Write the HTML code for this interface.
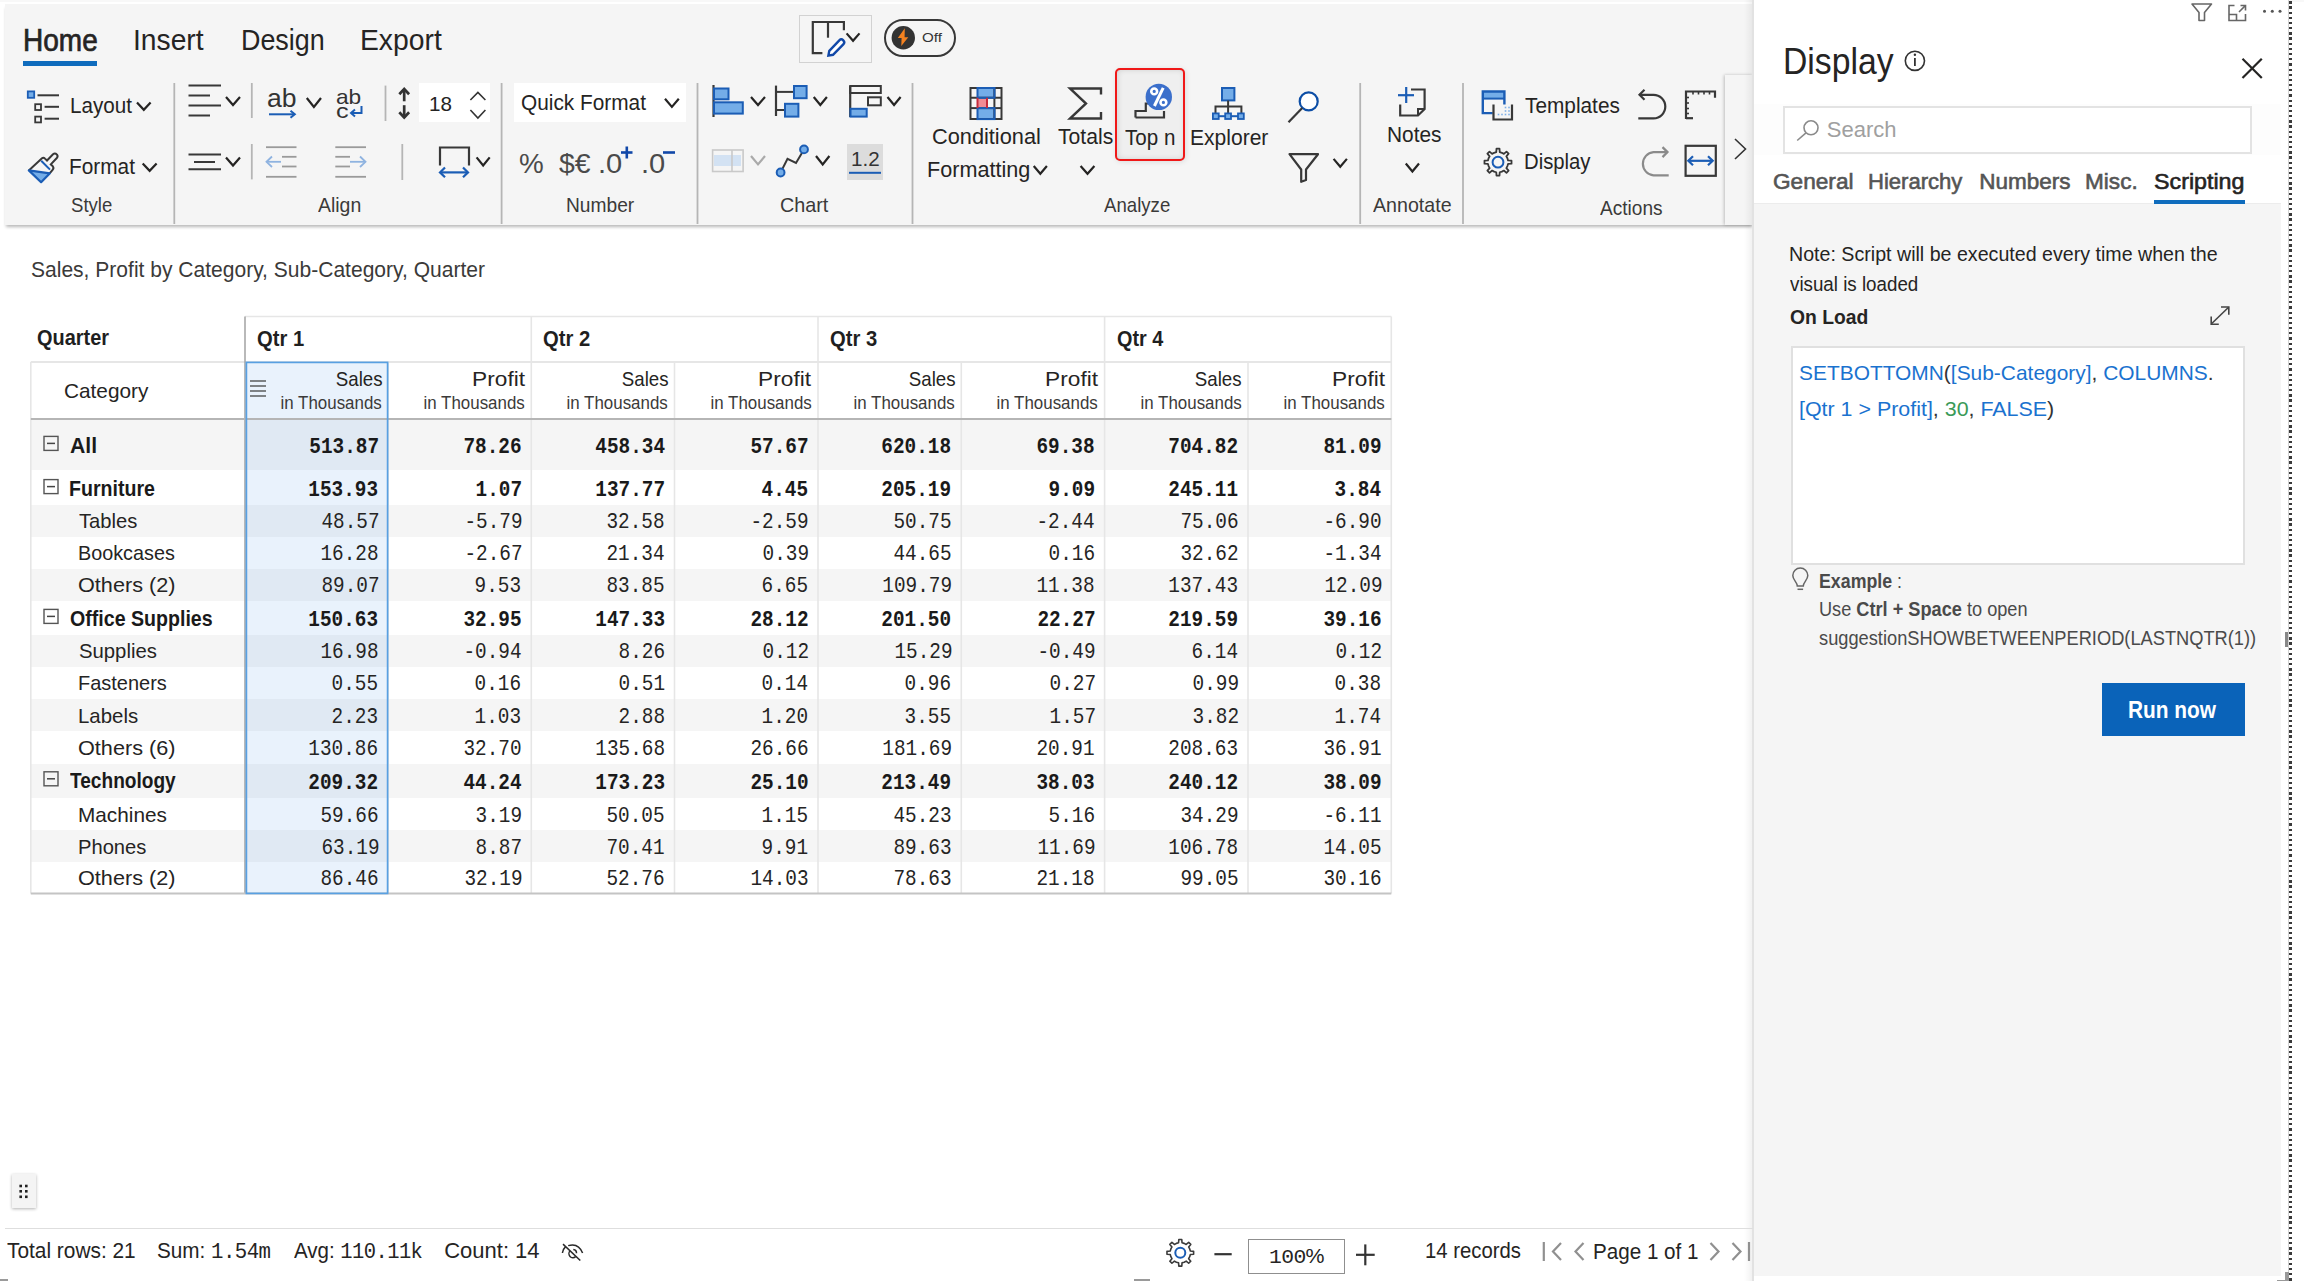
<!DOCTYPE html><html><head><meta charset="utf-8"><style>html,body{margin:0;padding:0;width:2304px;height:1281px;overflow:hidden;background:#fff;position:relative;font-family:"Liberation Sans",sans-serif}b{font-weight:700}</style></head><body>
<div style="position:absolute;left:0px;top:0px;width:2304px;height:2px;background:#f8f8f8"></div>
<div style="position:absolute;left:5px;top:4px;width:1748px;height:221px;background:#f5f5f5;box-shadow:0 3px 3px -1px rgba(0,0,0,.28)"></div>
<div style="position:absolute;left:23px;top:61px;width:74px;height:5px;background:#0f6cbd"></div>
<div style="position:absolute;left:799px;top:14.5px;width:72.5px;height:48px;box-sizing:border-box;border:1.5px solid #d2d2d2;background:#f5f5f5"></div>
<div style="position:absolute;left:884.3px;top:18.9px;width:71.6px;height:37.8px;box-sizing:border-box;border:2px solid #383838;border-radius:19px"></div>
<div style="position:absolute;left:418.6px;top:83px;width:71px;height:39px;background:#fff"></div>
<div style="position:absolute;left:514px;top:83px;width:172px;height:39px;background:#fff"></div>
<div style="position:absolute;left:713.5px;top:155px;width:27px;height:11px;background:#d3e2f3"></div>
<div style="position:absolute;left:847px;top:144px;width:36px;height:36px;background:#dcdcdc"></div>
<div style="position:absolute;left:978px;top:88.5px;width:16px;height:9px;background:#74ade8"></div>
<div style="position:absolute;left:978px;top:108.5px;width:16px;height:10px;background:#74ade8"></div>
<div style="position:absolute;left:978px;top:98.5px;width:9px;height:9px;background:#f08b94"></div>
<div style="position:absolute;left:1116.5px;top:69px;width:68px;height:91px;border-radius:4px;background:#efefef;box-shadow:inset 0 0 6px rgba(0,0,0,.16), 0 1px 6px rgba(0,0,0,.14)"></div>
<div style="position:absolute;left:1115.3px;top:68.2px;width:70.1px;height:92.9px;box-sizing:border-box;border:2.4px solid #f01818;border-radius:5px"></div>
<div style="position:absolute;left:1483.5px;top:92.2px;width:20.2px;height:6.3px;background:#74ade8"></div>
<div style="position:absolute;left:1724.8px;top:75.3px;width:28.5px;height:150px;background:#f5f5f5;box-shadow:-1px 0 3px rgba(0,0,0,.22)"></div>
<div style="position:absolute;left:31px;top:419px;width:1360.3px;height:51px;background:#f5f5f5"></div>
<div style="position:absolute;left:31px;top:505px;width:1360.3px;height:32px;background:#f5f5f5"></div>
<div style="position:absolute;left:31px;top:569px;width:1360.3px;height:32px;background:#f5f5f5"></div>
<div style="position:absolute;left:31px;top:635px;width:1360.3px;height:32px;background:#f5f5f5"></div>
<div style="position:absolute;left:31px;top:699px;width:1360.3px;height:32px;background:#f5f5f5"></div>
<div style="position:absolute;left:31px;top:764px;width:1360.3px;height:34px;background:#f5f5f5"></div>
<div style="position:absolute;left:31px;top:830px;width:1360.3px;height:32px;background:#f5f5f5"></div>
<div style="position:absolute;left:246.5px;top:362px;width:141.5px;height:531.5px;background:rgba(120,175,235,.16)"></div>
<div style="position:absolute;left:1754px;top:0px;width:534px;height:1281px;background:#fff"></div>
<div style="position:absolute;left:1744px;top:0px;width:9px;height:1281px;background:linear-gradient(to right, rgba(0,0,0,0), rgba(0,0,0,.06))"></div>
<div style="position:absolute;left:1752.2px;top:0px;width:1.8px;height:1281px;background:#e2e2e2"></div>
<div style="position:absolute;left:1754px;top:104px;width:527px;height:51px;background:#fdfdfd"></div>
<div style="position:absolute;left:1754px;top:203.5px;width:527px;height:1072px;background:#f5f5f5"></div>
<div style="position:absolute;left:1754px;top:202.5px;width:527px;height:1.5px;background:#ececec"></div>
<div style="position:absolute;left:2287.6px;top:0px;width:1.2px;height:1281px;background:#d2d2d2"></div>
<div style="position:absolute;left:2289.2px;top:0px;width:2.7px;height:1281px;background:repeating-linear-gradient(to bottom,transparent 0,transparent 1.3px,#3a3a3a 1.3px,#3a3a3a 3.6px,transparent 3.6px,transparent 5.17px)"></div>
<div style="position:absolute;left:1783px;top:105.5px;width:469px;height:48px;box-sizing:border-box;border:2px solid #e3e3e3;background:#fff"></div>
<div style="position:absolute;left:2154px;top:200px;width:91px;height:4px;background:#0f6cbd"></div>
<div style="position:absolute;left:1790.5px;top:346px;width:454px;height:218.5px;box-sizing:border-box;border:2px solid #e0e0e0;background:#fff"></div>
<div style="position:absolute;left:2101.5px;top:682.5px;width:143px;height:53.7px;background:#0a63b9"></div>
<div style="position:absolute;left:2284.5px;top:632px;width:3px;height:15px;background:#888"></div>
<div style="position:absolute;left:11.5px;top:1174.3px;width:24.4px;height:33.7px;background:#f4f4f4;box-shadow:0 1px 3px rgba(0,0,0,.3)"></div>
<div style="position:absolute;left:5px;top:1227.5px;width:1748px;height:1.6px;background:#dedede"></div>
<div style="position:absolute;left:1247.8px;top:1239.4px;width:97.2px;height:35px;box-sizing:border-box;border:1.6px solid #8f8f8f;background:#fff"></div>
<div style="position:absolute;left:0px;top:1279.3px;width:8px;height:1.7px;background:#9a9a9a"></div>
<div style="position:absolute;left:1134.3px;top:1279.3px;width:15.6px;height:1.7px;background:#9a9a9a"></div>
<div style="position:absolute;left:2285.2px;top:1272.2px;width:3.6px;height:9px;background:#9a9a9a"></div>
<div style="position:absolute;left:2277px;top:1279.8px;width:8.5px;height:1.2px;background:#9a9a9a"></div>
<svg style="position:absolute;left:0;top:0" width="2304" height="1281" viewBox="0 0 2304 1281"><path d="M822.4,53.2 H812.8 V22 H843.9 V30.3" stroke="#383838" fill="none" stroke-width="2.2" /><line x1="828" y1="22" x2="828" y2="37.7" stroke="#383838" stroke-width="2.2" stroke-linecap="butt"/><path d="M829.3,50.8 L839.3,40.3 a2.8,2.8 0 0 1 4,4 L833,54.8 L828.4,55.6 Z" stroke="#1148a8" fill="#fff" stroke-width="2.4" /><polyline points="846.6,33.4 853.05,40.8 859.5,33.4" fill="none" stroke="#252423" stroke-width="2.2"/><circle cx="903.3" cy="37.7" r="11.7" fill="#333"/><path d="M904.8,28.3 L897.8,38.1 H901.6 L901.3,46 L908.3,37.3 H904.6 Z" stroke="none" fill="#f58220" stroke-width="0" /><rect x="27.8" y="91.4" width="6.4" height="6.4" rx="0" stroke="#1b5db5" fill="#74ade8" stroke-width="1.8"/><line x1="37.5" y1="95.3" x2="59" y2="95.3" stroke="#383838" stroke-width="2" stroke-linecap="butt"/><rect x="35.2" y="104.2" width="5.8" height="5.8" rx="0" stroke="#383838" fill="none" stroke-width="1.8"/><line x1="44.6" y1="106.8" x2="59" y2="106.8" stroke="#383838" stroke-width="2" stroke-linecap="butt"/><rect x="35.2" y="116.6" width="5.8" height="5.8" rx="0" stroke="#383838" fill="none" stroke-width="1.8"/><line x1="44.6" y1="118.7" x2="59" y2="118.7" stroke="#383838" stroke-width="2" stroke-linecap="butt"/><polyline points="137,102.5 143.8,109.8 150.6,102.5" fill="none" stroke="#252423" stroke-width="2.2"/><path d="M28.8,170.4 L42,158.2 Q43.5,157 45,158.6 L47,160.5 L53,154.2 Q55,152.6 57,154.6 Q58.3,156.3 56.8,158 L50.8,164.4 L52.8,166.3 Q54.2,168 52.6,169.8 L49.7,173.4" stroke="#383838" fill="none" stroke-width="2" /><path d="M28.8,170.4 L49.7,173.4 L41.1,182.2 Z" stroke="#1b5db5" fill="#74ade8" stroke-width="2.2" stroke-linejoin="round"/><line x1="41.2" y1="160.8" x2="50" y2="169.6" stroke="#1b5db5" stroke-width="2" stroke-linecap="butt"/><polyline points="142.7,163.5 149.64999999999998,170.8 156.6,163.5" fill="none" stroke="#252423" stroke-width="2.2"/><line x1="174.3" y1="83" x2="174.3" y2="224" stroke="#b5b5b5" stroke-width="1.8" stroke-linecap="butt"/><line x1="188.5" y1="85.5" x2="221" y2="85.5" stroke="#383838" stroke-width="2" stroke-linecap="butt"/><line x1="188.5" y1="95.5" x2="210" y2="95.5" stroke="#383838" stroke-width="2" stroke-linecap="butt"/><line x1="188.5" y1="105.5" x2="221" y2="105.5" stroke="#383838" stroke-width="2" stroke-linecap="butt"/><line x1="188.5" y1="115.5" x2="210" y2="115.5" stroke="#383838" stroke-width="2" stroke-linecap="butt"/><polyline points="226,97 233.0,105 240,97" fill="none" stroke="#252423" stroke-width="2.2"/><line x1="251.8" y1="83" x2="251.8" y2="118" stroke="#b5b5b5" stroke-width="1.8" stroke-linecap="butt"/><line x1="269" y1="114.3" x2="294" y2="114.3" stroke="#1b5db5" stroke-width="2" stroke-linecap="butt"/><path d="M290.5,110.8 L294.8,114.3 L290.5,117.8" stroke="#1b5db5" fill="none" stroke-width="2" /><polyline points="306.8,98 313.9,106.9 321,98" fill="none" stroke="#252423" stroke-width="2.2"/><path d="M361.5,106 V113 H351.5" stroke="#1b5db5" fill="none" stroke-width="2" /><path d="M355,109.5 L351,113 L355,116.5" stroke="#1b5db5" fill="none" stroke-width="2" /><line x1="385.5" y1="85.6" x2="385.5" y2="121" stroke="#b5b5b5" stroke-width="1.8" stroke-linecap="butt"/><line x1="404.2" y1="89" x2="404.2" y2="101.3" stroke="#333" stroke-width="2.7" stroke-linecap="butt"/><line x1="404.2" y1="105.2" x2="404.2" y2="117.5" stroke="#333" stroke-width="2.7" stroke-linecap="butt"/><path d="M399.3,94.2 L404.2,89 L409.1,94.2" stroke="#333" fill="none" stroke-width="2.7" stroke-linejoin="miter"/><path d="M399.3,112.3 L404.2,117.5 L409.1,112.3" stroke="#333" fill="none" stroke-width="2.7" stroke-linejoin="miter"/><polyline points="470.4,100 477.9,92.5 485.4,100" fill="none" stroke="#333" stroke-width="1.6"/><polyline points="470.4,110 477.9,118 485.4,110" fill="none" stroke="#333" stroke-width="1.6"/><line x1="501.6" y1="83" x2="501.6" y2="224" stroke="#b5b5b5" stroke-width="1.8" stroke-linecap="butt"/><line x1="188.5" y1="154.6" x2="221" y2="154.6" stroke="#383838" stroke-width="2" stroke-linecap="butt"/><line x1="194" y1="162" x2="215" y2="162" stroke="#383838" stroke-width="2" stroke-linecap="butt"/><line x1="188.5" y1="169.2" x2="221" y2="169.2" stroke="#383838" stroke-width="2" stroke-linecap="butt"/><polyline points="226,157.5 233.0,165.5 240,157.5" fill="none" stroke="#252423" stroke-width="2.2"/><line x1="251.8" y1="144" x2="251.8" y2="179.4" stroke="#b5b5b5" stroke-width="1.8" stroke-linecap="butt"/><line x1="266" y1="147.2" x2="296.5" y2="147.2" stroke="#9a9a9a" stroke-width="1.8" stroke-linecap="butt"/><line x1="282" y1="156.8" x2="296.5" y2="156.8" stroke="#9a9a9a" stroke-width="1.8" stroke-linecap="butt"/><line x1="282" y1="166.5" x2="296.5" y2="166.5" stroke="#9a9a9a" stroke-width="1.8" stroke-linecap="butt"/><line x1="266" y1="176.8" x2="296.5" y2="176.8" stroke="#9a9a9a" stroke-width="1.8" stroke-linecap="butt"/><line x1="267" y1="161.8" x2="281" y2="161.8" stroke="#8fb3e0" stroke-width="1.8" stroke-linecap="butt"/><path d="M272,156.5 L266.5,161.8 L272,167" stroke="#8fb3e0" fill="none" stroke-width="1.8" /><line x1="335.3" y1="147.2" x2="366" y2="147.2" stroke="#9a9a9a" stroke-width="1.8" stroke-linecap="butt"/><line x1="335.3" y1="156.8" x2="350" y2="156.8" stroke="#9a9a9a" stroke-width="1.8" stroke-linecap="butt"/><line x1="335.3" y1="166.5" x2="350" y2="166.5" stroke="#9a9a9a" stroke-width="1.8" stroke-linecap="butt"/><line x1="335.3" y1="176.8" x2="366" y2="176.8" stroke="#9a9a9a" stroke-width="1.8" stroke-linecap="butt"/><line x1="350" y1="161.8" x2="365" y2="161.8" stroke="#8fb3e0" stroke-width="1.8" stroke-linecap="butt"/><path d="M360,156.5 L365.5,161.8 L360,167" stroke="#8fb3e0" fill="none" stroke-width="1.8" /><line x1="402.3" y1="144" x2="402.3" y2="180" stroke="#b5b5b5" stroke-width="1.8" stroke-linecap="butt"/><path d="M440,165.5 V147.5 H469 V165.5" stroke="#383838" fill="none" stroke-width="2.2" /><line x1="441" y1="172.4" x2="468" y2="172.4" stroke="#1b5db5" stroke-width="2.2" stroke-linecap="butt"/><path d="M445,167.5 L440,172.4 L445,177.3" stroke="#1b5db5" fill="none" stroke-width="2.2" /><path d="M463,167.5 L468,172.4 L463,177.3" stroke="#1b5db5" fill="none" stroke-width="2.2" /><polyline points="476.6,157.4 483.15,165.5 489.7,157.4" fill="none" stroke="#252423" stroke-width="2.2"/><polyline points="665,98.8 671.9,106.9 678.8,98.8" fill="none" stroke="#252423" stroke-width="2.2"/><line x1="621" y1="152.5" x2="632.5" y2="152.5" stroke="#1148a8" stroke-width="2.6" stroke-linecap="butt"/><line x1="626.8" y1="146.5" x2="626.8" y2="158.5" stroke="#1148a8" stroke-width="2.6" stroke-linecap="butt"/><line x1="663" y1="152.5" x2="675" y2="152.5" stroke="#1148a8" stroke-width="2.6" stroke-linecap="butt"/><line x1="697.5" y1="83" x2="697.5" y2="224" stroke="#b5b5b5" stroke-width="1.8" stroke-linecap="butt"/><line x1="713.5" y1="85" x2="713.5" y2="117" stroke="#383838" stroke-width="2.2" stroke-linecap="butt"/><rect x="714" y="88.5" width="14.5" height="10.8" rx="0" stroke="#1b5db5" fill="#74ade8" stroke-width="2"/><rect x="714" y="102.3" width="28.8" height="11.3" rx="0" stroke="#1b5db5" fill="#74ade8" stroke-width="2"/><polyline points="751,97 758.0,105 765,97" fill="none" stroke="#252423" stroke-width="2.2"/><path d="M776,85.6 V116" stroke="#383838" fill="none" stroke-width="2.2" /><line x1="776" y1="91.9" x2="794" y2="91.9" stroke="#383838" stroke-width="2" stroke-linecap="butt"/><line x1="776" y1="110" x2="785" y2="110" stroke="#383838" stroke-width="2" stroke-linecap="butt"/><rect x="794" y="86" width="12.6" height="12.2" rx="0" stroke="#1b5db5" fill="#74ade8" stroke-width="2"/><rect x="785" y="103.8" width="13.4" height="12.8" rx="0" stroke="#1b5db5" fill="#74ade8" stroke-width="2"/><polyline points="813.75,97 820.325,105 826.9,97" fill="none" stroke="#252423" stroke-width="2.2"/><rect x="850.2" y="86" width="30.6" height="7" rx="0" stroke="#383838" fill="none" stroke-width="2"/><line x1="850.2" y1="86" x2="850.2" y2="117" stroke="#383838" stroke-width="2.2" stroke-linecap="butt"/><rect x="868" y="97.3" width="12.8" height="8" rx="0" stroke="#383838" fill="none" stroke-width="2"/><rect x="850.5" y="108.8" width="16.2" height="7.8" rx="0" stroke="#1b5db5" fill="#74ade8" stroke-width="2"/><polyline points="887.5,97 894.05,105 900.6,97" fill="none" stroke="#252423" stroke-width="2.2"/><rect x="712.6" y="150" width="30.5" height="21.5" rx="0" stroke="#c9c9c9" fill="none" stroke-width="1.6"/><line x1="732" y1="150" x2="732" y2="171.5" stroke="#c9c9c9" stroke-width="1.6" stroke-linecap="butt"/><polyline points="751,156 758.0,164.4 765,156" fill="none" stroke="#aaa" stroke-width="2.2"/><path d="M780.6,172.5 L787.5,158.75 L796,163 L804,149.4" stroke="#383838" fill="none" stroke-width="2" /><circle cx="780.6" cy="172.5" r="3.9" fill="#74ade8" stroke="#1b5db5" stroke-width="2"/><circle cx="804" cy="149.4" r="3.9" fill="#74ade8" stroke="#1b5db5" stroke-width="2"/><polyline points="816,156 822.7,164.4 829.4,156" fill="none" stroke="#252423" stroke-width="2.2"/><line x1="849" y1="172.8" x2="881" y2="172.8" stroke="#1b5db5" stroke-width="2" stroke-linecap="butt"/><line x1="912.5" y1="83" x2="912.5" y2="224" stroke="#b5b5b5" stroke-width="1.8" stroke-linecap="butt"/><rect x="970.5" y="88" width="31" height="31" rx="0" stroke="#383838" fill="none" stroke-width="2"/><line x1="970.5" y1="97.75" x2="1001.5" y2="97.75" stroke="#383838" stroke-width="2" stroke-linecap="butt"/><line x1="970.5" y1="108.1" x2="1001.5" y2="108.1" stroke="#383838" stroke-width="2" stroke-linecap="butt"/><line x1="994.4" y1="88" x2="994.4" y2="119" stroke="#383838" stroke-width="2" stroke-linecap="butt"/><rect x="977.5" y="88" width="17" height="9.75" rx="0" stroke="#1b5db5" fill="none" stroke-width="2"/><rect x="977.5" y="108.1" width="17" height="11" rx="0" stroke="#1b5db5" fill="none" stroke-width="2"/><line x1="977.5" y1="97.75" x2="977.5" y2="108.1" stroke="#c42b3c" stroke-width="2" stroke-linecap="butt"/><line x1="987" y1="97.75" x2="987" y2="108.1" stroke="#c42b3c" stroke-width="2" stroke-linecap="butt"/><polyline points="1033.75,166 1040.325,173.75 1046.9,166" fill="none" stroke="#252423" stroke-width="2.2"/><path d="M1101,94.5 V88.5 H1070 L1086,103.5 L1070,118.5 H1101 V112" stroke="#383838" fill="none" stroke-width="2.4" stroke-linejoin="miter"/><polyline points="1080.6,166 1087.5,173.75 1094.4,166" fill="none" stroke="#252423" stroke-width="2.2"/><path d="M1135.5,117.5 H1164 V111 M1135.5,117.5 V111 H1145.8 V103.5 H1150" stroke="#383838" fill="none" stroke-width="2.2" /><circle cx="1158.8" cy="96.9" r="13.2" fill="#3b6fcb"/><ellipse cx="1154.2" cy="91.4" rx="2.9" ry="2.9" fill="none" stroke="#fff" stroke-width="2.6"/><ellipse cx="1163.4" cy="102.4" rx="2.9" ry="2.9" fill="none" stroke="#fff" stroke-width="2.6"/><line x1="1163.2" y1="87.8" x2="1154.4" y2="106" stroke="#fff" stroke-width="3" stroke-linecap="butt"/><rect x="1222" y="88" width="12.4" height="12.4" rx="0" stroke="#1b5db5" fill="#74ade8" stroke-width="2"/><line x1="1228.1" y1="100.5" x2="1228.1" y2="113.5" stroke="#383838" stroke-width="2" stroke-linecap="butt"/><path d="M1215.5,113 V106.4 H1241.4 V113" stroke="#383838" fill="none" stroke-width="2" /><rect x="1212.9" y="113.4" width="5.8" height="5.6" rx="0" stroke="#1b5db5" fill="#74ade8" stroke-width="1.8"/><rect x="1225.2" y="113.4" width="5.8" height="5.6" rx="0" stroke="#1b5db5" fill="#74ade8" stroke-width="1.8"/><rect x="1238" y="113.4" width="5.8" height="5.6" rx="0" stroke="#1b5db5" fill="#74ade8" stroke-width="1.8"/><line x1="1218.7" y1="116.2" x2="1225.2" y2="116.2" stroke="#1b5db5" stroke-width="2" stroke-linecap="butt"/><line x1="1231" y1="116.2" x2="1238" y2="116.2" stroke="#1b5db5" stroke-width="2" stroke-linecap="butt"/><circle cx="1308.7" cy="101.4" r="9" fill="#fff" stroke="#0d4ea6" stroke-width="2.2"/><line x1="1302.2" y1="108" x2="1288.5" y2="122.3" stroke="#383838" stroke-width="2.2" stroke-linecap="butt"/><path d="M1289.5,154.2 H1318 L1306,169.5 V180 L1301.2,181.8 V169.5 Z" stroke="#383838" fill="none" stroke-width="2.2" stroke-linejoin="round"/><polyline points="1333.6,158.9 1340.25,166.8 1346.9,158.9" fill="none" stroke="#252423" stroke-width="2.2"/><line x1="1360.2" y1="83" x2="1360.2" y2="224" stroke="#b5b5b5" stroke-width="1.8" stroke-linecap="butt"/><line x1="1406.2" y1="87" x2="1406.2" y2="103" stroke="#1b5db5" stroke-width="2.2" stroke-linecap="butt"/><line x1="1398" y1="95.2" x2="1414" y2="95.2" stroke="#1b5db5" stroke-width="2.2" stroke-linecap="butt"/><path d="M1411,89.5 H1424.6 V109.1 L1418,115.5 H1400.2 V104.5" stroke="#383838" fill="none" stroke-width="2.2" /><path d="M1424.6,109.1 H1418 V115.5" stroke="#383838" fill="none" stroke-width="2" /><polyline points="1405.8,163.5 1412.4,171.5 1419,163.5" fill="none" stroke="#252423" stroke-width="2.2"/><line x1="1463" y1="83" x2="1463" y2="224" stroke="#b5b5b5" stroke-width="1.8" stroke-linecap="butt"/><path d="M1492.7,113.1 H1482.8 V91.5 H1504.4 V104.5" stroke="#1b5db5" fill="none" stroke-width="2.4" /><line x1="1482.8" y1="98.6" x2="1504.4" y2="98.6" stroke="#1b5db5" stroke-width="2" stroke-linecap="butt"/><path d="M1493.5,104.5 V119.5 H1512 V104.5" stroke="#383838" fill="none" stroke-width="2.2" /><rect x="1508.2" y="106.7" width="1.6" height="1.6" fill="#7fb0e6"/><rect x="1508.2" y="110.2" width="1.6" height="1.6" fill="#7fb0e6"/><rect x="1508.2" y="113.7" width="1.6" height="1.6" fill="#7fb0e6"/><rect x="1504.7" y="110.2" width="1.6" height="1.6" fill="#7fb0e6"/><rect x="1504.7" y="113.7" width="1.6" height="1.6" fill="#7fb0e6"/><rect x="1501.2" y="113.7" width="1.6" height="1.6" fill="#7fb0e6"/><rect x="1497.7" y="113.7" width="1.6" height="1.6" fill="#7fb0e6"/><rect x="1504.7" y="106.7" width="1.6" height="1.6" fill="#7fb0e6"/><polygon points="1507.42,158.30 1508.05,160.45 1511.52,160.71 1511.52,163.69 1508.05,163.95 1507.42,166.10 1506.35,168.07 1508.61,170.70 1506.50,172.81 1503.87,170.55 1501.90,171.62 1499.75,172.25 1499.49,175.72 1496.51,175.72 1496.25,172.25 1494.10,171.62 1492.13,170.55 1489.50,172.81 1487.39,170.70 1489.65,168.07 1488.58,166.10 1487.95,163.95 1484.48,163.69 1484.48,160.71 1487.95,160.45 1488.58,158.30 1489.65,156.33 1487.39,153.70 1489.50,151.59 1492.13,153.85 1494.10,152.78 1496.25,152.15 1496.51,148.68 1499.49,148.68 1499.75,152.15 1501.90,152.78 1503.87,153.85 1506.50,151.59 1508.61,153.70 1506.35,156.33" fill="none" stroke="#383838" stroke-width="1.8" stroke-linejoin="round"/><circle cx="1498" cy="162.2" r="5.4" fill="none" stroke="#1b5db5" stroke-width="2"/><path d="M1639.5,94.8 H1653.5 A11.8,11.8 0 0 1 1653.5,118.4 H1638.3" stroke="#383838" fill="none" stroke-width="2.2" /><path d="M1644.5,89.8 L1639.5,94.8 L1644.5,99.8" stroke="#383838" fill="none" stroke-width="2.2" /><path d="M1686,119 V91.5 H1715 V97.8" stroke="#383838" fill="none" stroke-width="2.2" /><line x1="1686" y1="118.2" x2="1693" y2="118.2" stroke="#383838" stroke-width="2.2" stroke-linecap="butt"/><line x1="1693" y1="91.5" x2="1693" y2="94.5" stroke="#383838" stroke-width="1.6" stroke-linecap="butt"/><line x1="1698.5" y1="91.5" x2="1698.5" y2="94.5" stroke="#383838" stroke-width="1.6" stroke-linecap="butt"/><line x1="1704" y1="91.5" x2="1704" y2="94.5" stroke="#383838" stroke-width="1.6" stroke-linecap="butt"/><line x1="1709.5" y1="91.5" x2="1709.5" y2="94.5" stroke="#383838" stroke-width="1.6" stroke-linecap="butt"/><line x1="1686" y1="97.5" x2="1689" y2="97.5" stroke="#383838" stroke-width="1.6" stroke-linecap="butt"/><line x1="1686" y1="103" x2="1689" y2="103" stroke="#383838" stroke-width="1.6" stroke-linecap="butt"/><line x1="1686" y1="108.5" x2="1689" y2="108.5" stroke="#383838" stroke-width="1.6" stroke-linecap="butt"/><line x1="1686" y1="113.5" x2="1689" y2="113.5" stroke="#383838" stroke-width="1.6" stroke-linecap="butt"/><path d="M1667.5,152.1 H1653.5 A11.7,11.7 0 0 0 1653.5,175.4 H1668.7" stroke="#8a8a8a" fill="none" stroke-width="2.2" /><path d="M1662.5,147.1 L1667.5,152.1 L1662.5,157.1" stroke="#8a8a8a" fill="none" stroke-width="2.2" /><rect x="1685.6" y="145.8" width="30.2" height="30" rx="0" stroke="#383838" fill="none" stroke-width="2.2"/><line x1="1688.5" y1="160.8" x2="1712.5" y2="160.8" stroke="#1b5db5" stroke-width="2.2" stroke-linecap="butt"/><path d="M1693,156.3 L1688.3,160.8 L1693,165.3" stroke="#1b5db5" fill="none" stroke-width="2.2" /><path d="M1708,156.3 L1712.7,160.8 L1708,165.3" stroke="#1b5db5" fill="none" stroke-width="2.2" /><path d="M1735,139 L1745.5,149 L1735,159" stroke="#333" fill="none" stroke-width="1.6" /><line x1="30.8" y1="362" x2="30.8" y2="893.5" stroke="#e6e6e6" stroke-width="1.6" stroke-linecap="butt"/><line x1="245" y1="316.5" x2="1391.3" y2="316.5" stroke="#e6e6e6" stroke-width="1.6" stroke-linecap="butt"/><line x1="245" y1="362" x2="1391.3" y2="362" stroke="#e6e6e6" stroke-width="2" stroke-linecap="butt"/><line x1="30.8" y1="362" x2="245" y2="362" stroke="#e6e6e6" stroke-width="2" stroke-linecap="butt"/><line x1="388.2" y1="362" x2="388.2" y2="893.5" stroke="#e6e6e6" stroke-width="1.6" stroke-linecap="butt"/><line x1="531.3" y1="316.5" x2="531.3" y2="893.5" stroke="#e6e6e6" stroke-width="1.6" stroke-linecap="butt"/><line x1="674.5" y1="362" x2="674.5" y2="893.5" stroke="#e6e6e6" stroke-width="1.6" stroke-linecap="butt"/><line x1="818" y1="316.5" x2="818" y2="893.5" stroke="#e6e6e6" stroke-width="1.6" stroke-linecap="butt"/><line x1="961.3" y1="362" x2="961.3" y2="893.5" stroke="#e6e6e6" stroke-width="1.6" stroke-linecap="butt"/><line x1="1104.6" y1="316.5" x2="1104.6" y2="893.5" stroke="#e6e6e6" stroke-width="1.6" stroke-linecap="butt"/><line x1="1248" y1="362" x2="1248" y2="893.5" stroke="#e6e6e6" stroke-width="1.6" stroke-linecap="butt"/><line x1="1391.3" y1="316.5" x2="1391.3" y2="893.5" stroke="#e6e6e6" stroke-width="1.6" stroke-linecap="butt"/><line x1="245" y1="316.5" x2="245" y2="893.5" stroke="#a8a8a8" stroke-width="1.6" stroke-linecap="butt"/><line x1="30.8" y1="419" x2="1391.3" y2="419" stroke="#b5b5b5" stroke-width="2" stroke-linecap="butt"/><line x1="30.8" y1="893.5" x2="1391.3" y2="893.5" stroke="#c4c4c4" stroke-width="2" stroke-linecap="butt"/><rect x="246.4" y="362.4" width="141.2" height="531" rx="0" stroke="#58a0e2" fill="none" stroke-width="1.7"/><line x1="250" y1="381" x2="266" y2="381" stroke="#444" stroke-width="1.3" stroke-linecap="butt"/><line x1="250" y1="386" x2="266" y2="386" stroke="#444" stroke-width="1.3" stroke-linecap="butt"/><line x1="250" y1="391" x2="266" y2="391" stroke="#444" stroke-width="1.3" stroke-linecap="butt"/><line x1="250" y1="396" x2="266" y2="396" stroke="#444" stroke-width="1.3" stroke-linecap="butt"/><rect x="44" y="436.4" width="14" height="14" rx="0" stroke="#555" fill="none" stroke-width="1.4"/><line x1="47" y1="443.4" x2="55" y2="443.4" stroke="#444" stroke-width="1.5" stroke-linecap="butt"/><rect x="44" y="479.59999999999997" width="14" height="14" rx="0" stroke="#555" fill="none" stroke-width="1.4"/><line x1="47" y1="486.59999999999997" x2="55" y2="486.59999999999997" stroke="#444" stroke-width="1.5" stroke-linecap="butt"/><rect x="44" y="609.4000000000001" width="14" height="14" rx="0" stroke="#555" fill="none" stroke-width="1.4"/><line x1="47" y1="616.4000000000001" x2="55" y2="616.4000000000001" stroke="#444" stroke-width="1.5" stroke-linecap="butt"/><rect x="44" y="771.8000000000001" width="14" height="14" rx="0" stroke="#555" fill="none" stroke-width="1.4"/><line x1="47" y1="778.8000000000001" x2="55" y2="778.8000000000001" stroke="#444" stroke-width="1.5" stroke-linecap="butt"/><path d="M2192,4 H2211.5 L2204.5,12.5 V20.5 H2199 V12.5 Z" stroke="#666" fill="none" stroke-width="1.6" stroke-linejoin="round"/><path d="M2234.5,5.5 H2229 V20.5 H2245.5 V14" stroke="#666" fill="none" stroke-width="1.6" /><path d="M2229,14.5 H2236.5 V20.5" stroke="#666" fill="none" stroke-width="1.6" /><line x1="2239" y1="12" x2="2245.3" y2="5.6" stroke="#666" stroke-width="1.6" stroke-linecap="butt"/><path d="M2240.5,5.5 H2245.5 V10.5" stroke="#666" fill="none" stroke-width="1.6" /><circle cx="2264.5" cy="11.3" r="1.5" fill="#555"/><circle cx="2272.3" cy="11.3" r="1.5" fill="#555"/><circle cx="2280" cy="11.3" r="1.5" fill="#555"/><line x1="2242.5" y1="58.8" x2="2261.8" y2="78" stroke="#252423" stroke-width="2.2" stroke-linecap="butt"/><line x1="2261.8" y1="58.8" x2="2242.5" y2="78" stroke="#252423" stroke-width="2.2" stroke-linecap="butt"/><circle cx="1914.9" cy="60.8" r="9.6" fill="none" stroke="#333" stroke-width="1.6"/><line x1="1914.9" y1="58" x2="1914.9" y2="66" stroke="#333" stroke-width="1.8" stroke-linecap="butt"/><circle cx="1914.9" cy="54.8" r="1.2" fill="#333"/><circle cx="1811" cy="127.8" r="7" fill="none" stroke="#8a8a8a" stroke-width="1.6"/><line x1="1806" y1="132.8" x2="1797.2" y2="140.5" stroke="#8a8a8a" stroke-width="1.6" stroke-linecap="butt"/><line x1="2211.5" y1="323.8" x2="2228.6" y2="307.2" stroke="#444" stroke-width="1.6" stroke-linecap="butt"/><path d="M2211.2,316.5 V324.2 H2218.8" stroke="#444" fill="none" stroke-width="1.6" /><path d="M2221,307 H2228.8 V314.8" stroke="#444" fill="none" stroke-width="1.6" /><path d="M1797.3,586 C1797.3,582 1792.8,580 1792.8,575.5 A7.5,7.5 0 0 1 1807.8,575.5 C1807.8,580 1803.3,582 1803.3,586 Z" stroke="#666" fill="none" stroke-width="1.5" /><line x1="1797.5" y1="589.3" x2="1803.1" y2="589.3" stroke="#666" stroke-width="1.5" stroke-linecap="butt"/><rect x="19.4" y="1184.7" width="2.6" height="2.6" fill="#222"/><rect x="19.4" y="1190.0" width="2.6" height="2.6" fill="#222"/><rect x="19.4" y="1195.5" width="2.6" height="2.6" fill="#222"/><rect x="25.0" y="1184.7" width="2.6" height="2.6" fill="#222"/><rect x="25.0" y="1190.0" width="2.6" height="2.6" fill="#222"/><rect x="25.0" y="1195.5" width="2.6" height="2.6" fill="#222"/><path d="M562.4,1253 Q563,1249 565.6,1246.6" stroke="#2a2a2a" fill="none" stroke-width="1.5" /><path d="M568.2,1245.6 Q578.5,1242.5 582.6,1253" stroke="#2a2a2a" fill="none" stroke-width="1.5" /><path d="M570.2,1250.8 A3.6,3.6 0 0 0 575.6,1256.6" stroke="#2a2a2a" fill="none" stroke-width="1.5" /><path d="M573.3,1249.5 A3.6,3.6 0 0 1 576.5,1253.2" stroke="#2a2a2a" fill="none" stroke-width="1.5" /><line x1="563" y1="1244.1" x2="580.3" y2="1260.5" stroke="#2a2a2a" stroke-width="1.5" stroke-linecap="butt"/><polygon points="1189.72,1248.90 1190.35,1251.05 1193.62,1251.33 1193.62,1254.27 1190.35,1254.55 1189.72,1256.70 1188.65,1258.67 1190.76,1261.18 1188.68,1263.26 1186.17,1261.15 1184.20,1262.22 1182.05,1262.85 1181.77,1266.12 1178.83,1266.12 1178.55,1262.85 1176.40,1262.22 1174.43,1261.15 1171.92,1263.26 1169.84,1261.18 1171.95,1258.67 1170.88,1256.70 1170.25,1254.55 1166.98,1254.27 1166.98,1251.33 1170.25,1251.05 1170.88,1248.90 1171.95,1246.93 1169.84,1244.42 1171.92,1242.34 1174.43,1244.45 1176.40,1243.38 1178.55,1242.75 1178.83,1239.48 1181.77,1239.48 1182.05,1242.75 1184.20,1243.38 1186.17,1244.45 1188.68,1242.34 1190.76,1244.42 1188.65,1246.93" fill="none" stroke="#3a3a3a" stroke-width="1.6" stroke-linejoin="round"/><circle cx="1180.3" cy="1252.8" r="5.0" fill="none" stroke="#1b5db5" stroke-width="2"/><line x1="1214.4" y1="1254.2" x2="1231.7" y2="1254.2" stroke="#333" stroke-width="2.2" stroke-linecap="butt"/><line x1="1356" y1="1254.8" x2="1374.7" y2="1254.8" stroke="#333" stroke-width="2.2" stroke-linecap="butt"/><line x1="1365.3" y1="1244.4" x2="1365.3" y2="1265.3" stroke="#333" stroke-width="2.2" stroke-linecap="butt"/><line x1="1543.8" y1="1242" x2="1543.8" y2="1261" stroke="#909090" stroke-width="2.2" stroke-linecap="butt"/><path d="M1561,1243 L1553,1251.5 L1561,1260" stroke="#909090" fill="none" stroke-width="2.2" /><path d="M1583.5,1243 L1575.5,1251.5 L1583.5,1260" stroke="#909090" fill="none" stroke-width="2.2" /><path d="M1710.5,1243 L1718.5,1251.5 L1710.5,1260" stroke="#909090" fill="none" stroke-width="2.2" /><path d="M1732.5,1243 L1740.5,1251.5 L1732.5,1260" stroke="#909090" fill="none" stroke-width="2.2" /><line x1="1749" y1="1242" x2="1749" y2="1261" stroke="#909090" stroke-width="2.2" stroke-linecap="butt"/></svg>
<div style="position:absolute;top:24.75px;font-size:30.5px;line-height:30.5px;font-family:'Liberation Sans', sans-serif;font-weight:400;color:#252423;white-space:pre;-webkit-text-stroke:0.7px #252423;left:23.46px;transform:scaleX(0.9184);transform-origin:left top;">Home</div>
<div style="position:absolute;top:25.10px;font-size:30px;line-height:30px;font-family:'Liberation Sans', sans-serif;font-weight:400;color:#252423;white-space:pre;left:132.92px;transform:scaleX(0.9404);transform-origin:left top;">Insert</div>
<div style="position:absolute;top:25.10px;font-size:30px;line-height:30px;font-family:'Liberation Sans', sans-serif;font-weight:400;color:#252423;white-space:pre;left:240.71px;transform:scaleX(0.8963);transform-origin:left top;">Design</div>
<div style="position:absolute;top:25.10px;font-size:30px;line-height:30px;font-family:'Liberation Sans', sans-serif;font-weight:400;color:#252423;white-space:pre;left:360.11px;transform:scaleX(0.9430);transform-origin:left top;">Export</div>
<div style="position:absolute;top:30.90px;font-size:13px;line-height:13px;font-family:'Liberation Sans', sans-serif;font-weight:400;color:#333;white-space:pre;left:921.80px;transform:scaleX(1.1665);transform-origin:left top;">Off</div>
<div style="position:absolute;top:95.95px;font-size:21.5px;line-height:21.5px;font-family:'Liberation Sans', sans-serif;font-weight:400;color:#252423;white-space:pre;left:70.04px;transform:scaleX(0.9594);transform-origin:left top;">Layout</div>
<div style="position:absolute;top:157.05px;font-size:21.5px;line-height:21.5px;font-family:'Liberation Sans', sans-serif;font-weight:400;color:#252423;white-space:pre;left:68.73px;transform:scaleX(0.9685);transform-origin:left top;">Format</div>
<div style="position:absolute;top:194.85px;font-size:20.3px;line-height:20.3px;font-family:'Liberation Sans', sans-serif;font-weight:400;color:#3b3a39;white-space:pre;left:71.00px;transform:scaleX(0.9150);transform-origin:left top;">Style</div>
<div style="position:absolute;top:86.00px;font-size:25px;line-height:25px;font-family:'Liberation Sans', sans-serif;font-weight:400;color:#333;white-space:pre;left:267.44px;transform:scaleX(1.0616);transform-origin:left top;">ab</div>
<div style="position:absolute;top:85.70px;font-size:21px;line-height:21px;font-family:'Liberation Sans', sans-serif;font-weight:400;color:#333;white-space:pre;left:336.00px;transform:scaleX(1.0803);transform-origin:left top;">ab</div>
<div style="position:absolute;top:100.00px;font-size:21px;line-height:21px;font-family:'Liberation Sans', sans-serif;font-weight:400;color:#333;white-space:pre;left:336.00px;transform:scaleX(1.2000);transform-origin:left top;">c</div>
<div style="position:absolute;top:92.60px;font-size:21px;line-height:21px;font-family:'Liberation Sans', sans-serif;font-weight:400;color:#252423;white-space:pre;left:429.42px;transform:scaleX(0.9825);transform-origin:left top;">18</div>
<div style="position:absolute;top:194.55px;font-size:20.3px;line-height:20.3px;font-family:'Liberation Sans', sans-serif;font-weight:400;color:#3b3a39;white-space:pre;left:318.00px;transform:scaleX(0.9585);transform-origin:left top;">Align</div>
<div style="position:absolute;top:92.85px;font-size:21.5px;line-height:21.5px;font-family:'Liberation Sans', sans-serif;font-weight:400;color:#252423;white-space:pre;left:520.93px;transform:scaleX(0.9684);transform-origin:left top;">Quick Format</div>
<div style="position:absolute;top:150.50px;font-size:27px;line-height:27px;font-family:'Liberation Sans', sans-serif;font-weight:400;color:#4a4a4a;white-space:pre;left:519.00px;transform:scaleX(1.0292);transform-origin:left top;">%</div>
<div style="position:absolute;top:150.50px;font-size:27px;line-height:27px;font-family:'Liberation Sans', sans-serif;font-weight:400;color:#4a4a4a;white-space:pre;left:558.50px;transform:scaleX(1.0494);transform-origin:left top;">$€</div>
<div style="position:absolute;top:151.00px;font-size:27px;line-height:27px;font-family:'Liberation Sans', sans-serif;font-weight:400;color:#4a4a4a;white-space:pre;left:597.85px;transform:scaleX(1.0768);transform-origin:left top;">.0</div>
<div style="position:absolute;top:151.00px;font-size:27px;line-height:27px;font-family:'Liberation Sans', sans-serif;font-weight:400;color:#4a4a4a;white-space:pre;left:640.55px;transform:scaleX(1.0768);transform-origin:left top;">.0</div>
<div style="position:absolute;top:194.75px;font-size:20.3px;line-height:20.3px;font-family:'Liberation Sans', sans-serif;font-weight:400;color:#3b3a39;white-space:pre;left:565.95px;transform:scaleX(0.9457);transform-origin:left top;">Number</div>
<div style="position:absolute;top:148.30px;font-size:21px;line-height:21px;font-family:'Liberation Sans', sans-serif;font-weight:400;color:#333;white-space:pre;left:850.52px;transform:scaleX(0.9813);transform-origin:left top;">1.2</div>
<div style="position:absolute;top:194.75px;font-size:20.3px;line-height:20.3px;font-family:'Liberation Sans', sans-serif;font-weight:400;color:#3b3a39;white-space:pre;left:780.02px;transform:scaleX(0.9753);transform-origin:left top;">Chart</div>
<div style="position:absolute;top:127.25px;font-size:21.5px;line-height:21.5px;font-family:'Liberation Sans', sans-serif;font-weight:400;color:#252423;white-space:pre;left:931.99px;transform:scaleX(1.0114);transform-origin:left top;">Conditional</div>
<div style="position:absolute;top:159.75px;font-size:21.5px;line-height:21.5px;font-family:'Liberation Sans', sans-serif;font-weight:400;color:#252423;white-space:pre;left:926.50px;transform:scaleX(1.0045);transform-origin:left top;">Formatting</div>
<div style="position:absolute;top:127.25px;font-size:21.5px;line-height:21.5px;font-family:'Liberation Sans', sans-serif;font-weight:400;color:#252423;white-space:pre;left:1058.00px;transform:scaleX(0.9835);transform-origin:left top;">Totals</div>
<div style="position:absolute;top:127.55px;font-size:21.5px;line-height:21.5px;font-family:'Liberation Sans', sans-serif;font-weight:400;color:#252423;white-space:pre;left:1125.00px;transform:scaleX(0.9567);transform-origin:left top;">Top n</div>
<div style="position:absolute;top:127.55px;font-size:21.5px;line-height:21.5px;font-family:'Liberation Sans', sans-serif;font-weight:400;color:#252423;white-space:pre;left:1189.62px;transform:scaleX(0.9785);transform-origin:left top;">Explorer</div>
<div style="position:absolute;top:195.35px;font-size:20.3px;line-height:20.3px;font-family:'Liberation Sans', sans-serif;font-weight:400;color:#3b3a39;white-space:pre;left:1103.75px;transform:scaleX(0.9183);transform-origin:left top;">Analyze</div>
<div style="position:absolute;top:125.25px;font-size:21.5px;line-height:21.5px;font-family:'Liberation Sans', sans-serif;font-weight:400;color:#252423;white-space:pre;left:1386.93px;transform:scaleX(0.9703);transform-origin:left top;">Notes</div>
<div style="position:absolute;top:194.85px;font-size:20.3px;line-height:20.3px;font-family:'Liberation Sans', sans-serif;font-weight:400;color:#3b3a39;white-space:pre;left:1373.30px;transform:scaleX(0.9677);transform-origin:left top;">Annotate</div>
<div style="position:absolute;top:96.00px;font-size:21.5px;line-height:21.5px;font-family:'Liberation Sans', sans-serif;font-weight:400;color:#252423;white-space:pre;left:1524.60px;transform:scaleX(0.9682);transform-origin:left top;">Templates</div>
<div style="position:absolute;top:152.45px;font-size:21.5px;line-height:21.5px;font-family:'Liberation Sans', sans-serif;font-weight:400;color:#252423;white-space:pre;left:1524.26px;transform:scaleX(0.9434);transform-origin:left top;">Display</div>
<div style="position:absolute;top:197.85px;font-size:20.3px;line-height:20.3px;font-family:'Liberation Sans', sans-serif;font-weight:400;color:#3b3a39;white-space:pre;left:1599.80px;transform:scaleX(0.9402);transform-origin:left top;">Actions</div>
<div style="position:absolute;top:259.10px;font-size:21.8px;line-height:21.8px;font-family:'Liberation Sans', sans-serif;font-weight:400;color:#3b3a39;white-space:pre;left:31.20px;transform:scaleX(0.9651);transform-origin:left top;">Sales, Profit by Category, Sub-Category, Quarter</div>
<div style="position:absolute;top:326.95px;font-size:22.5px;line-height:22.5px;font-family:'Liberation Sans', sans-serif;font-weight:700;color:#1f1f1f;white-space:pre;left:36.60px;transform:scaleX(0.8857);transform-origin:left top;">Quarter</div>
<div style="position:absolute;top:328.30px;font-size:22.2px;line-height:22.2px;font-family:'Liberation Sans', sans-serif;font-weight:700;color:#1f1f1f;white-space:pre;left:257.00px;transform:scaleX(0.9116);transform-origin:left top;">Qtr 1</div>
<div style="position:absolute;top:328.30px;font-size:22.2px;line-height:22.2px;font-family:'Liberation Sans', sans-serif;font-weight:700;color:#1f1f1f;white-space:pre;left:543.30px;transform:scaleX(0.9116);transform-origin:left top;">Qtr 2</div>
<div style="position:absolute;top:328.30px;font-size:22.2px;line-height:22.2px;font-family:'Liberation Sans', sans-serif;font-weight:700;color:#1f1f1f;white-space:pre;left:830.00px;transform:scaleX(0.9116);transform-origin:left top;">Qtr 3</div>
<div style="position:absolute;top:328.30px;font-size:22.2px;line-height:22.2px;font-family:'Liberation Sans', sans-serif;font-weight:700;color:#1f1f1f;white-space:pre;left:1116.60px;transform:scaleX(0.8943);transform-origin:left top;">Qtr 4</div>
<div style="position:absolute;top:380.00px;font-size:21px;line-height:21px;font-family:'Liberation Sans', sans-serif;font-weight:400;color:#252423;white-space:pre;left:63.71px;transform:scaleX(0.9904);transform-origin:left top;">Category</div>
<div style="position:absolute;top:367.90px;font-size:21px;line-height:21px;font-family:'Liberation Sans', sans-serif;font-weight:400;color:#252423;white-space:pre;right:1921.86px;transform:scaleX(0.8899);transform-origin:right top;">Sales</div>
<div style="position:absolute;top:395.05px;font-size:17.5px;line-height:17.5px;font-family:'Liberation Sans', sans-serif;font-weight:400;color:#3b3a39;white-space:pre;right:1922.54px;transform:scaleX(0.9663);transform-origin:right top;">in Thousands</div>
<div style="position:absolute;top:367.90px;font-size:21px;line-height:21px;font-family:'Liberation Sans', sans-serif;font-weight:400;color:#252423;white-space:pre;right:1779.38px;transform:scaleX(1.0793);transform-origin:right top;">Profit</div>
<div style="position:absolute;top:395.05px;font-size:17.5px;line-height:17.5px;font-family:'Liberation Sans', sans-serif;font-weight:400;color:#3b3a39;white-space:pre;right:1779.44px;transform:scaleX(0.9663);transform-origin:right top;">in Thousands</div>
<div style="position:absolute;top:367.90px;font-size:21px;line-height:21px;font-family:'Liberation Sans', sans-serif;font-weight:400;color:#252423;white-space:pre;right:1635.56px;transform:scaleX(0.8899);transform-origin:right top;">Sales</div>
<div style="position:absolute;top:395.05px;font-size:17.5px;line-height:17.5px;font-family:'Liberation Sans', sans-serif;font-weight:400;color:#3b3a39;white-space:pre;right:1636.24px;transform:scaleX(0.9663);transform-origin:right top;">in Thousands</div>
<div style="position:absolute;top:367.90px;font-size:21px;line-height:21px;font-family:'Liberation Sans', sans-serif;font-weight:400;color:#252423;white-space:pre;right:1492.68px;transform:scaleX(1.0793);transform-origin:right top;">Profit</div>
<div style="position:absolute;top:395.05px;font-size:17.5px;line-height:17.5px;font-family:'Liberation Sans', sans-serif;font-weight:400;color:#3b3a39;white-space:pre;right:1492.74px;transform:scaleX(0.9663);transform-origin:right top;">in Thousands</div>
<div style="position:absolute;top:367.90px;font-size:21px;line-height:21px;font-family:'Liberation Sans', sans-serif;font-weight:400;color:#252423;white-space:pre;right:1348.76px;transform:scaleX(0.8899);transform-origin:right top;">Sales</div>
<div style="position:absolute;top:395.05px;font-size:17.5px;line-height:17.5px;font-family:'Liberation Sans', sans-serif;font-weight:400;color:#3b3a39;white-space:pre;right:1349.44px;transform:scaleX(0.9663);transform-origin:right top;">in Thousands</div>
<div style="position:absolute;top:367.90px;font-size:21px;line-height:21px;font-family:'Liberation Sans', sans-serif;font-weight:400;color:#252423;white-space:pre;right:1206.08px;transform:scaleX(1.0793);transform-origin:right top;">Profit</div>
<div style="position:absolute;top:395.05px;font-size:17.5px;line-height:17.5px;font-family:'Liberation Sans', sans-serif;font-weight:400;color:#3b3a39;white-space:pre;right:1206.14px;transform:scaleX(0.9663);transform-origin:right top;">in Thousands</div>
<div style="position:absolute;top:367.90px;font-size:21px;line-height:21px;font-family:'Liberation Sans', sans-serif;font-weight:400;color:#252423;white-space:pre;right:1062.06px;transform:scaleX(0.8899);transform-origin:right top;">Sales</div>
<div style="position:absolute;top:395.05px;font-size:17.5px;line-height:17.5px;font-family:'Liberation Sans', sans-serif;font-weight:400;color:#3b3a39;white-space:pre;right:1062.74px;transform:scaleX(0.9663);transform-origin:right top;">in Thousands</div>
<div style="position:absolute;top:367.90px;font-size:21px;line-height:21px;font-family:'Liberation Sans', sans-serif;font-weight:400;color:#252423;white-space:pre;right:919.38px;transform:scaleX(1.0793);transform-origin:right top;">Profit</div>
<div style="position:absolute;top:395.05px;font-size:17.5px;line-height:17.5px;font-family:'Liberation Sans', sans-serif;font-weight:400;color:#3b3a39;white-space:pre;right:919.44px;transform:scaleX(0.9663);transform-origin:right top;">in Thousands</div>
<div style="position:absolute;top:434.55px;font-size:22.3px;line-height:22.3px;font-family:'Liberation Sans', sans-serif;font-weight:700;color:#1a1a1a;white-space:pre;left:70.20px;transform:scaleX(0.9525);transform-origin:left top;">All</div>
<div style="position:absolute;top:436.25px;font-size:22.5px;line-height:22.5px;font-family:'Liberation Mono', monospace;font-weight:700;color:#1a1a1a;white-space:pre;right:1924.81px;transform:scaleX(0.8600);transform-origin:right top;">513.87</div>
<div style="position:absolute;top:436.25px;font-size:22.5px;line-height:22.5px;font-family:'Liberation Mono', monospace;font-weight:700;color:#1a1a1a;white-space:pre;right:1782.57px;transform:scaleX(0.8600);transform-origin:right top;">78.26</div>
<div style="position:absolute;top:436.25px;font-size:22.5px;line-height:22.5px;font-family:'Liberation Mono', monospace;font-weight:700;color:#1a1a1a;white-space:pre;right:1639.37px;transform:scaleX(0.8600);transform-origin:right top;">458.34</div>
<div style="position:absolute;top:436.25px;font-size:22.5px;line-height:22.5px;font-family:'Liberation Mono', monospace;font-weight:700;color:#1a1a1a;white-space:pre;right:1495.01px;transform:scaleX(0.8600);transform-origin:right top;">57.67</div>
<div style="position:absolute;top:436.25px;font-size:22.5px;line-height:22.5px;font-family:'Liberation Mono', monospace;font-weight:700;color:#1a1a1a;white-space:pre;right:1352.57px;transform:scaleX(0.8600);transform-origin:right top;">620.18</div>
<div style="position:absolute;top:436.25px;font-size:22.5px;line-height:22.5px;font-family:'Liberation Mono', monospace;font-weight:700;color:#1a1a1a;white-space:pre;right:1209.27px;transform:scaleX(0.8600);transform-origin:right top;">69.38</div>
<div style="position:absolute;top:436.25px;font-size:22.5px;line-height:22.5px;font-family:'Liberation Mono', monospace;font-weight:700;color:#1a1a1a;white-space:pre;right:1065.87px;transform:scaleX(0.8600);transform-origin:right top;">704.82</div>
<div style="position:absolute;top:436.25px;font-size:22.5px;line-height:22.5px;font-family:'Liberation Mono', monospace;font-weight:700;color:#1a1a1a;white-space:pre;right:922.57px;transform:scaleX(0.8600);transform-origin:right top;">81.09</div>
<div style="position:absolute;top:477.75px;font-size:22.3px;line-height:22.3px;font-family:'Liberation Sans', sans-serif;font-weight:700;color:#1a1a1a;white-space:pre;left:69.32px;transform:scaleX(0.8781);transform-origin:left top;">Furniture</div>
<div style="position:absolute;top:479.45px;font-size:22.5px;line-height:22.5px;font-family:'Liberation Mono', monospace;font-weight:700;color:#1a1a1a;white-space:pre;right:1925.67px;transform:scaleX(0.8600);transform-origin:right top;">153.93</div>
<div style="position:absolute;top:479.45px;font-size:22.5px;line-height:22.5px;font-family:'Liberation Mono', monospace;font-weight:700;color:#1a1a1a;white-space:pre;right:1781.71px;transform:scaleX(0.8600);transform-origin:right top;">1.07</div>
<div style="position:absolute;top:479.45px;font-size:22.5px;line-height:22.5px;font-family:'Liberation Mono', monospace;font-weight:700;color:#1a1a1a;white-space:pre;right:1638.51px;transform:scaleX(0.8600);transform-origin:right top;">137.77</div>
<div style="position:absolute;top:479.45px;font-size:22.5px;line-height:22.5px;font-family:'Liberation Mono', monospace;font-weight:700;color:#1a1a1a;white-space:pre;right:1495.87px;transform:scaleX(0.8600);transform-origin:right top;">4.45</div>
<div style="position:absolute;top:479.45px;font-size:22.5px;line-height:22.5px;font-family:'Liberation Mono', monospace;font-weight:700;color:#1a1a1a;white-space:pre;right:1352.57px;transform:scaleX(0.8600);transform-origin:right top;">205.19</div>
<div style="position:absolute;top:479.45px;font-size:22.5px;line-height:22.5px;font-family:'Liberation Mono', monospace;font-weight:700;color:#1a1a1a;white-space:pre;right:1209.27px;transform:scaleX(0.8600);transform-origin:right top;">9.09</div>
<div style="position:absolute;top:479.45px;font-size:22.5px;line-height:22.5px;font-family:'Liberation Mono', monospace;font-weight:700;color:#1a1a1a;white-space:pre;right:1065.87px;transform:scaleX(0.8600);transform-origin:right top;">245.11</div>
<div style="position:absolute;top:479.45px;font-size:22.5px;line-height:22.5px;font-family:'Liberation Mono', monospace;font-weight:700;color:#1a1a1a;white-space:pre;right:922.57px;transform:scaleX(0.8600);transform-origin:right top;">3.84</div>
<div style="position:absolute;top:509.90px;font-size:21px;line-height:21px;font-family:'Liberation Sans', sans-serif;font-weight:400;color:#252423;white-space:pre;left:78.80px;transform:scaleX(0.9601);transform-origin:left top;">Tables</div>
<div style="position:absolute;top:510.95px;font-size:22.5px;line-height:22.5px;font-family:'Liberation Mono', monospace;font-weight:400;color:#252423;white-space:pre;right:1924.81px;transform:scaleX(0.8600);transform-origin:right top;">48.57</div>
<div style="position:absolute;top:510.95px;font-size:22.5px;line-height:22.5px;font-family:'Liberation Mono', monospace;font-weight:400;color:#252423;white-space:pre;right:1781.71px;transform:scaleX(0.8600);transform-origin:right top;">-5.79</div>
<div style="position:absolute;top:510.95px;font-size:22.5px;line-height:22.5px;font-family:'Liberation Mono', monospace;font-weight:400;color:#252423;white-space:pre;right:1639.37px;transform:scaleX(0.8600);transform-origin:right top;">32.58</div>
<div style="position:absolute;top:510.95px;font-size:22.5px;line-height:22.5px;font-family:'Liberation Mono', monospace;font-weight:400;color:#252423;white-space:pre;right:1495.01px;transform:scaleX(0.8600);transform-origin:right top;">-2.59</div>
<div style="position:absolute;top:510.95px;font-size:22.5px;line-height:22.5px;font-family:'Liberation Mono', monospace;font-weight:400;color:#252423;white-space:pre;right:1352.57px;transform:scaleX(0.8600);transform-origin:right top;">50.75</div>
<div style="position:absolute;top:510.95px;font-size:22.5px;line-height:22.5px;font-family:'Liberation Mono', monospace;font-weight:400;color:#252423;white-space:pre;right:1209.27px;transform:scaleX(0.8600);transform-origin:right top;">-2.44</div>
<div style="position:absolute;top:510.95px;font-size:22.5px;line-height:22.5px;font-family:'Liberation Mono', monospace;font-weight:400;color:#252423;white-space:pre;right:1065.87px;transform:scaleX(0.8600);transform-origin:right top;">75.06</div>
<div style="position:absolute;top:510.95px;font-size:22.5px;line-height:22.5px;font-family:'Liberation Mono', monospace;font-weight:400;color:#252423;white-space:pre;right:922.57px;transform:scaleX(0.8600);transform-origin:right top;">-6.90</div>
<div style="position:absolute;top:541.60px;font-size:21px;line-height:21px;font-family:'Liberation Sans', sans-serif;font-weight:400;color:#252423;white-space:pre;left:77.86px;transform:scaleX(0.9425);transform-origin:left top;">Bookcases</div>
<div style="position:absolute;top:542.65px;font-size:22.5px;line-height:22.5px;font-family:'Liberation Mono', monospace;font-weight:400;color:#252423;white-space:pre;right:1925.67px;transform:scaleX(0.8600);transform-origin:right top;">16.28</div>
<div style="position:absolute;top:542.65px;font-size:22.5px;line-height:22.5px;font-family:'Liberation Mono', monospace;font-weight:400;color:#252423;white-space:pre;right:1781.71px;transform:scaleX(0.8600);transform-origin:right top;">-2.67</div>
<div style="position:absolute;top:542.65px;font-size:22.5px;line-height:22.5px;font-family:'Liberation Mono', monospace;font-weight:400;color:#252423;white-space:pre;right:1639.37px;transform:scaleX(0.8600);transform-origin:right top;">21.34</div>
<div style="position:absolute;top:542.65px;font-size:22.5px;line-height:22.5px;font-family:'Liberation Mono', monospace;font-weight:400;color:#252423;white-space:pre;right:1495.01px;transform:scaleX(0.8600);transform-origin:right top;">0.39</div>
<div style="position:absolute;top:542.65px;font-size:22.5px;line-height:22.5px;font-family:'Liberation Mono', monospace;font-weight:400;color:#252423;white-space:pre;right:1352.57px;transform:scaleX(0.8600);transform-origin:right top;">44.65</div>
<div style="position:absolute;top:542.65px;font-size:22.5px;line-height:22.5px;font-family:'Liberation Mono', monospace;font-weight:400;color:#252423;white-space:pre;right:1209.27px;transform:scaleX(0.8600);transform-origin:right top;">0.16</div>
<div style="position:absolute;top:542.65px;font-size:22.5px;line-height:22.5px;font-family:'Liberation Mono', monospace;font-weight:400;color:#252423;white-space:pre;right:1065.01px;transform:scaleX(0.8600);transform-origin:right top;">32.62</div>
<div style="position:absolute;top:542.65px;font-size:22.5px;line-height:22.5px;font-family:'Liberation Mono', monospace;font-weight:400;color:#252423;white-space:pre;right:922.57px;transform:scaleX(0.8600);transform-origin:right top;">-1.34</div>
<div style="position:absolute;top:574.00px;font-size:21px;line-height:21px;font-family:'Liberation Sans', sans-serif;font-weight:400;color:#252423;white-space:pre;left:77.77px;transform:scaleX(1.0310);transform-origin:left top;">Others (2)</div>
<div style="position:absolute;top:575.05px;font-size:22.5px;line-height:22.5px;font-family:'Liberation Mono', monospace;font-weight:400;color:#252423;white-space:pre;right:1924.81px;transform:scaleX(0.8600);transform-origin:right top;">89.07</div>
<div style="position:absolute;top:575.05px;font-size:22.5px;line-height:22.5px;font-family:'Liberation Mono', monospace;font-weight:400;color:#252423;white-space:pre;right:1782.57px;transform:scaleX(0.8600);transform-origin:right top;">9.53</div>
<div style="position:absolute;top:575.05px;font-size:22.5px;line-height:22.5px;font-family:'Liberation Mono', monospace;font-weight:400;color:#252423;white-space:pre;right:1639.37px;transform:scaleX(0.8600);transform-origin:right top;">83.85</div>
<div style="position:absolute;top:575.05px;font-size:22.5px;line-height:22.5px;font-family:'Liberation Mono', monospace;font-weight:400;color:#252423;white-space:pre;right:1495.87px;transform:scaleX(0.8600);transform-origin:right top;">6.65</div>
<div style="position:absolute;top:575.05px;font-size:22.5px;line-height:22.5px;font-family:'Liberation Mono', monospace;font-weight:400;color:#252423;white-space:pre;right:1351.71px;transform:scaleX(0.8600);transform-origin:right top;">109.79</div>
<div style="position:absolute;top:575.05px;font-size:22.5px;line-height:22.5px;font-family:'Liberation Mono', monospace;font-weight:400;color:#252423;white-space:pre;right:1209.27px;transform:scaleX(0.8600);transform-origin:right top;">11.38</div>
<div style="position:absolute;top:575.05px;font-size:22.5px;line-height:22.5px;font-family:'Liberation Mono', monospace;font-weight:400;color:#252423;white-space:pre;right:1065.87px;transform:scaleX(0.8600);transform-origin:right top;">137.43</div>
<div style="position:absolute;top:575.05px;font-size:22.5px;line-height:22.5px;font-family:'Liberation Mono', monospace;font-weight:400;color:#252423;white-space:pre;right:921.71px;transform:scaleX(0.8600);transform-origin:right top;">12.09</div>
<div style="position:absolute;top:607.55px;font-size:22.3px;line-height:22.3px;font-family:'Liberation Sans', sans-serif;font-weight:700;color:#1a1a1a;white-space:pre;left:70.20px;transform:scaleX(0.8789);transform-origin:left top;">Office Supplies</div>
<div style="position:absolute;top:609.25px;font-size:22.5px;line-height:22.5px;font-family:'Liberation Mono', monospace;font-weight:700;color:#1a1a1a;white-space:pre;right:1925.67px;transform:scaleX(0.8600);transform-origin:right top;">150.63</div>
<div style="position:absolute;top:609.25px;font-size:22.5px;line-height:22.5px;font-family:'Liberation Mono', monospace;font-weight:700;color:#1a1a1a;white-space:pre;right:1782.57px;transform:scaleX(0.8600);transform-origin:right top;">32.95</div>
<div style="position:absolute;top:609.25px;font-size:22.5px;line-height:22.5px;font-family:'Liberation Mono', monospace;font-weight:700;color:#1a1a1a;white-space:pre;right:1639.37px;transform:scaleX(0.8600);transform-origin:right top;">147.33</div>
<div style="position:absolute;top:609.25px;font-size:22.5px;line-height:22.5px;font-family:'Liberation Mono', monospace;font-weight:700;color:#1a1a1a;white-space:pre;right:1495.87px;transform:scaleX(0.8600);transform-origin:right top;">28.12</div>
<div style="position:absolute;top:609.25px;font-size:22.5px;line-height:22.5px;font-family:'Liberation Mono', monospace;font-weight:700;color:#1a1a1a;white-space:pre;right:1352.57px;transform:scaleX(0.8600);transform-origin:right top;">201.50</div>
<div style="position:absolute;top:609.25px;font-size:22.5px;line-height:22.5px;font-family:'Liberation Mono', monospace;font-weight:700;color:#1a1a1a;white-space:pre;right:1208.41px;transform:scaleX(0.8600);transform-origin:right top;">22.27</div>
<div style="position:absolute;top:609.25px;font-size:22.5px;line-height:22.5px;font-family:'Liberation Mono', monospace;font-weight:700;color:#1a1a1a;white-space:pre;right:1065.87px;transform:scaleX(0.8600);transform-origin:right top;">219.59</div>
<div style="position:absolute;top:609.25px;font-size:22.5px;line-height:22.5px;font-family:'Liberation Mono', monospace;font-weight:700;color:#1a1a1a;white-space:pre;right:922.57px;transform:scaleX(0.8600);transform-origin:right top;">39.16</div>
<div style="position:absolute;top:640.20px;font-size:21px;line-height:21px;font-family:'Liberation Sans', sans-serif;font-weight:400;color:#252423;white-space:pre;left:78.80px;transform:scaleX(0.9668);transform-origin:left top;">Supplies</div>
<div style="position:absolute;top:641.25px;font-size:22.5px;line-height:22.5px;font-family:'Liberation Mono', monospace;font-weight:400;color:#252423;white-space:pre;right:1925.67px;transform:scaleX(0.8600);transform-origin:right top;">16.98</div>
<div style="position:absolute;top:641.25px;font-size:22.5px;line-height:22.5px;font-family:'Liberation Mono', monospace;font-weight:400;color:#252423;white-space:pre;right:1782.57px;transform:scaleX(0.8600);transform-origin:right top;">-0.94</div>
<div style="position:absolute;top:641.25px;font-size:22.5px;line-height:22.5px;font-family:'Liberation Mono', monospace;font-weight:400;color:#252423;white-space:pre;right:1639.37px;transform:scaleX(0.8600);transform-origin:right top;">8.26</div>
<div style="position:absolute;top:641.25px;font-size:22.5px;line-height:22.5px;font-family:'Liberation Mono', monospace;font-weight:400;color:#252423;white-space:pre;right:1495.01px;transform:scaleX(0.8600);transform-origin:right top;">0.12</div>
<div style="position:absolute;top:641.25px;font-size:22.5px;line-height:22.5px;font-family:'Liberation Mono', monospace;font-weight:400;color:#252423;white-space:pre;right:1351.71px;transform:scaleX(0.8600);transform-origin:right top;">15.29</div>
<div style="position:absolute;top:641.25px;font-size:22.5px;line-height:22.5px;font-family:'Liberation Mono', monospace;font-weight:400;color:#252423;white-space:pre;right:1208.41px;transform:scaleX(0.8600);transform-origin:right top;">-0.49</div>
<div style="position:absolute;top:641.25px;font-size:22.5px;line-height:22.5px;font-family:'Liberation Mono', monospace;font-weight:400;color:#252423;white-space:pre;right:1065.87px;transform:scaleX(0.8600);transform-origin:right top;">6.14</div>
<div style="position:absolute;top:641.25px;font-size:22.5px;line-height:22.5px;font-family:'Liberation Mono', monospace;font-weight:400;color:#252423;white-space:pre;right:921.71px;transform:scaleX(0.8600);transform-origin:right top;">0.12</div>
<div style="position:absolute;top:672.30px;font-size:21px;line-height:21px;font-family:'Liberation Sans', sans-serif;font-weight:400;color:#252423;white-space:pre;left:77.85px;transform:scaleX(0.9513);transform-origin:left top;">Fasteners</div>
<div style="position:absolute;top:673.35px;font-size:22.5px;line-height:22.5px;font-family:'Liberation Mono', monospace;font-weight:400;color:#252423;white-space:pre;right:1925.67px;transform:scaleX(0.8600);transform-origin:right top;">0.55</div>
<div style="position:absolute;top:673.35px;font-size:22.5px;line-height:22.5px;font-family:'Liberation Mono', monospace;font-weight:400;color:#252423;white-space:pre;right:1782.57px;transform:scaleX(0.8600);transform-origin:right top;">0.16</div>
<div style="position:absolute;top:673.35px;font-size:22.5px;line-height:22.5px;font-family:'Liberation Mono', monospace;font-weight:400;color:#252423;white-space:pre;right:1639.37px;transform:scaleX(0.8600);transform-origin:right top;">0.51</div>
<div style="position:absolute;top:673.35px;font-size:22.5px;line-height:22.5px;font-family:'Liberation Mono', monospace;font-weight:400;color:#252423;white-space:pre;right:1495.87px;transform:scaleX(0.8600);transform-origin:right top;">0.14</div>
<div style="position:absolute;top:673.35px;font-size:22.5px;line-height:22.5px;font-family:'Liberation Mono', monospace;font-weight:400;color:#252423;white-space:pre;right:1352.57px;transform:scaleX(0.8600);transform-origin:right top;">0.96</div>
<div style="position:absolute;top:673.35px;font-size:22.5px;line-height:22.5px;font-family:'Liberation Mono', monospace;font-weight:400;color:#252423;white-space:pre;right:1208.41px;transform:scaleX(0.8600);transform-origin:right top;">0.27</div>
<div style="position:absolute;top:673.35px;font-size:22.5px;line-height:22.5px;font-family:'Liberation Mono', monospace;font-weight:400;color:#252423;white-space:pre;right:1065.01px;transform:scaleX(0.8600);transform-origin:right top;">0.99</div>
<div style="position:absolute;top:673.35px;font-size:22.5px;line-height:22.5px;font-family:'Liberation Mono', monospace;font-weight:400;color:#252423;white-space:pre;right:922.57px;transform:scaleX(0.8600);transform-origin:right top;">0.38</div>
<div style="position:absolute;top:704.70px;font-size:21px;line-height:21px;font-family:'Liberation Sans', sans-serif;font-weight:400;color:#252423;white-space:pre;left:77.83px;transform:scaleX(0.9721);transform-origin:left top;">Labels</div>
<div style="position:absolute;top:705.75px;font-size:22.5px;line-height:22.5px;font-family:'Liberation Mono', monospace;font-weight:400;color:#252423;white-space:pre;right:1925.67px;transform:scaleX(0.8600);transform-origin:right top;">2.23</div>
<div style="position:absolute;top:705.75px;font-size:22.5px;line-height:22.5px;font-family:'Liberation Mono', monospace;font-weight:400;color:#252423;white-space:pre;right:1782.57px;transform:scaleX(0.8600);transform-origin:right top;">1.03</div>
<div style="position:absolute;top:705.75px;font-size:22.5px;line-height:22.5px;font-family:'Liberation Mono', monospace;font-weight:400;color:#252423;white-space:pre;right:1639.37px;transform:scaleX(0.8600);transform-origin:right top;">2.88</div>
<div style="position:absolute;top:705.75px;font-size:22.5px;line-height:22.5px;font-family:'Liberation Mono', monospace;font-weight:400;color:#252423;white-space:pre;right:1495.87px;transform:scaleX(0.8600);transform-origin:right top;">1.20</div>
<div style="position:absolute;top:705.75px;font-size:22.5px;line-height:22.5px;font-family:'Liberation Mono', monospace;font-weight:400;color:#252423;white-space:pre;right:1352.57px;transform:scaleX(0.8600);transform-origin:right top;">3.55</div>
<div style="position:absolute;top:705.75px;font-size:22.5px;line-height:22.5px;font-family:'Liberation Mono', monospace;font-weight:400;color:#252423;white-space:pre;right:1208.41px;transform:scaleX(0.8600);transform-origin:right top;">1.57</div>
<div style="position:absolute;top:705.75px;font-size:22.5px;line-height:22.5px;font-family:'Liberation Mono', monospace;font-weight:400;color:#252423;white-space:pre;right:1065.01px;transform:scaleX(0.8600);transform-origin:right top;">3.82</div>
<div style="position:absolute;top:705.75px;font-size:22.5px;line-height:22.5px;font-family:'Liberation Mono', monospace;font-weight:400;color:#252423;white-space:pre;right:922.57px;transform:scaleX(0.8600);transform-origin:right top;">1.74</div>
<div style="position:absolute;top:736.90px;font-size:21px;line-height:21px;font-family:'Liberation Sans', sans-serif;font-weight:400;color:#252423;white-space:pre;left:77.77px;transform:scaleX(1.0310);transform-origin:left top;">Others (6)</div>
<div style="position:absolute;top:737.95px;font-size:22.5px;line-height:22.5px;font-family:'Liberation Mono', monospace;font-weight:400;color:#252423;white-space:pre;right:1925.67px;transform:scaleX(0.8600);transform-origin:right top;">130.86</div>
<div style="position:absolute;top:737.95px;font-size:22.5px;line-height:22.5px;font-family:'Liberation Mono', monospace;font-weight:400;color:#252423;white-space:pre;right:1782.57px;transform:scaleX(0.8600);transform-origin:right top;">32.70</div>
<div style="position:absolute;top:737.95px;font-size:22.5px;line-height:22.5px;font-family:'Liberation Mono', monospace;font-weight:400;color:#252423;white-space:pre;right:1639.37px;transform:scaleX(0.8600);transform-origin:right top;">135.68</div>
<div style="position:absolute;top:737.95px;font-size:22.5px;line-height:22.5px;font-family:'Liberation Mono', monospace;font-weight:400;color:#252423;white-space:pre;right:1495.87px;transform:scaleX(0.8600);transform-origin:right top;">26.66</div>
<div style="position:absolute;top:737.95px;font-size:22.5px;line-height:22.5px;font-family:'Liberation Mono', monospace;font-weight:400;color:#252423;white-space:pre;right:1351.71px;transform:scaleX(0.8600);transform-origin:right top;">181.69</div>
<div style="position:absolute;top:737.95px;font-size:22.5px;line-height:22.5px;font-family:'Liberation Mono', monospace;font-weight:400;color:#252423;white-space:pre;right:1209.27px;transform:scaleX(0.8600);transform-origin:right top;">20.91</div>
<div style="position:absolute;top:737.95px;font-size:22.5px;line-height:22.5px;font-family:'Liberation Mono', monospace;font-weight:400;color:#252423;white-space:pre;right:1065.87px;transform:scaleX(0.8600);transform-origin:right top;">208.63</div>
<div style="position:absolute;top:737.95px;font-size:22.5px;line-height:22.5px;font-family:'Liberation Mono', monospace;font-weight:400;color:#252423;white-space:pre;right:922.57px;transform:scaleX(0.8600);transform-origin:right top;">36.91</div>
<div style="position:absolute;top:769.95px;font-size:22.3px;line-height:22.3px;font-family:'Liberation Sans', sans-serif;font-weight:700;color:#1a1a1a;white-space:pre;left:70.20px;transform:scaleX(0.8560);transform-origin:left top;">Technology</div>
<div style="position:absolute;top:771.65px;font-size:22.5px;line-height:22.5px;font-family:'Liberation Mono', monospace;font-weight:700;color:#1a1a1a;white-space:pre;right:1925.67px;transform:scaleX(0.8600);transform-origin:right top;">209.32</div>
<div style="position:absolute;top:771.65px;font-size:22.5px;line-height:22.5px;font-family:'Liberation Mono', monospace;font-weight:700;color:#1a1a1a;white-space:pre;right:1782.57px;transform:scaleX(0.8600);transform-origin:right top;">44.24</div>
<div style="position:absolute;top:771.65px;font-size:22.5px;line-height:22.5px;font-family:'Liberation Mono', monospace;font-weight:700;color:#1a1a1a;white-space:pre;right:1639.37px;transform:scaleX(0.8600);transform-origin:right top;">173.23</div>
<div style="position:absolute;top:771.65px;font-size:22.5px;line-height:22.5px;font-family:'Liberation Mono', monospace;font-weight:700;color:#1a1a1a;white-space:pre;right:1495.87px;transform:scaleX(0.8600);transform-origin:right top;">25.10</div>
<div style="position:absolute;top:771.65px;font-size:22.5px;line-height:22.5px;font-family:'Liberation Mono', monospace;font-weight:700;color:#1a1a1a;white-space:pre;right:1352.57px;transform:scaleX(0.8600);transform-origin:right top;">213.49</div>
<div style="position:absolute;top:771.65px;font-size:22.5px;line-height:22.5px;font-family:'Liberation Mono', monospace;font-weight:700;color:#1a1a1a;white-space:pre;right:1209.27px;transform:scaleX(0.8600);transform-origin:right top;">38.03</div>
<div style="position:absolute;top:771.65px;font-size:22.5px;line-height:22.5px;font-family:'Liberation Mono', monospace;font-weight:700;color:#1a1a1a;white-space:pre;right:1065.87px;transform:scaleX(0.8600);transform-origin:right top;">240.12</div>
<div style="position:absolute;top:771.65px;font-size:22.5px;line-height:22.5px;font-family:'Liberation Mono', monospace;font-weight:700;color:#1a1a1a;white-space:pre;right:922.57px;transform:scaleX(0.8600);transform-origin:right top;">38.09</div>
<div style="position:absolute;top:803.80px;font-size:21px;line-height:21px;font-family:'Liberation Sans', sans-serif;font-weight:400;color:#252423;white-space:pre;left:77.81px;transform:scaleX(0.9890);transform-origin:left top;">Machines</div>
<div style="position:absolute;top:804.85px;font-size:22.5px;line-height:22.5px;font-family:'Liberation Mono', monospace;font-weight:400;color:#252423;white-space:pre;right:1925.67px;transform:scaleX(0.8600);transform-origin:right top;">59.66</div>
<div style="position:absolute;top:804.85px;font-size:22.5px;line-height:22.5px;font-family:'Liberation Mono', monospace;font-weight:400;color:#252423;white-space:pre;right:1781.71px;transform:scaleX(0.8600);transform-origin:right top;">3.19</div>
<div style="position:absolute;top:804.85px;font-size:22.5px;line-height:22.5px;font-family:'Liberation Mono', monospace;font-weight:400;color:#252423;white-space:pre;right:1639.37px;transform:scaleX(0.8600);transform-origin:right top;">50.05</div>
<div style="position:absolute;top:804.85px;font-size:22.5px;line-height:22.5px;font-family:'Liberation Mono', monospace;font-weight:400;color:#252423;white-space:pre;right:1495.87px;transform:scaleX(0.8600);transform-origin:right top;">1.15</div>
<div style="position:absolute;top:804.85px;font-size:22.5px;line-height:22.5px;font-family:'Liberation Mono', monospace;font-weight:400;color:#252423;white-space:pre;right:1352.57px;transform:scaleX(0.8600);transform-origin:right top;">45.23</div>
<div style="position:absolute;top:804.85px;font-size:22.5px;line-height:22.5px;font-family:'Liberation Mono', monospace;font-weight:400;color:#252423;white-space:pre;right:1209.27px;transform:scaleX(0.8600);transform-origin:right top;">5.16</div>
<div style="position:absolute;top:804.85px;font-size:22.5px;line-height:22.5px;font-family:'Liberation Mono', monospace;font-weight:400;color:#252423;white-space:pre;right:1065.01px;transform:scaleX(0.8600);transform-origin:right top;">34.29</div>
<div style="position:absolute;top:804.85px;font-size:22.5px;line-height:22.5px;font-family:'Liberation Mono', monospace;font-weight:400;color:#252423;white-space:pre;right:922.57px;transform:scaleX(0.8600);transform-origin:right top;">-6.11</div>
<div style="position:absolute;top:836.20px;font-size:21px;line-height:21px;font-family:'Liberation Sans', sans-serif;font-weight:400;color:#252423;white-space:pre;left:77.84px;transform:scaleX(0.9595);transform-origin:left top;">Phones</div>
<div style="position:absolute;top:837.25px;font-size:22.5px;line-height:22.5px;font-family:'Liberation Mono', monospace;font-weight:400;color:#252423;white-space:pre;right:1924.81px;transform:scaleX(0.8600);transform-origin:right top;">63.19</div>
<div style="position:absolute;top:837.25px;font-size:22.5px;line-height:22.5px;font-family:'Liberation Mono', monospace;font-weight:400;color:#252423;white-space:pre;right:1781.71px;transform:scaleX(0.8600);transform-origin:right top;">8.87</div>
<div style="position:absolute;top:837.25px;font-size:22.5px;line-height:22.5px;font-family:'Liberation Mono', monospace;font-weight:400;color:#252423;white-space:pre;right:1639.37px;transform:scaleX(0.8600);transform-origin:right top;">70.41</div>
<div style="position:absolute;top:837.25px;font-size:22.5px;line-height:22.5px;font-family:'Liberation Mono', monospace;font-weight:400;color:#252423;white-space:pre;right:1495.87px;transform:scaleX(0.8600);transform-origin:right top;">9.91</div>
<div style="position:absolute;top:837.25px;font-size:22.5px;line-height:22.5px;font-family:'Liberation Mono', monospace;font-weight:400;color:#252423;white-space:pre;right:1352.57px;transform:scaleX(0.8600);transform-origin:right top;">89.63</div>
<div style="position:absolute;top:837.25px;font-size:22.5px;line-height:22.5px;font-family:'Liberation Mono', monospace;font-weight:400;color:#252423;white-space:pre;right:1208.41px;transform:scaleX(0.8600);transform-origin:right top;">11.69</div>
<div style="position:absolute;top:837.25px;font-size:22.5px;line-height:22.5px;font-family:'Liberation Mono', monospace;font-weight:400;color:#252423;white-space:pre;right:1065.87px;transform:scaleX(0.8600);transform-origin:right top;">106.78</div>
<div style="position:absolute;top:837.25px;font-size:22.5px;line-height:22.5px;font-family:'Liberation Mono', monospace;font-weight:400;color:#252423;white-space:pre;right:922.57px;transform:scaleX(0.8600);transform-origin:right top;">14.05</div>
<div style="position:absolute;top:867.00px;font-size:21px;line-height:21px;font-family:'Liberation Sans', sans-serif;font-weight:400;color:#252423;white-space:pre;left:77.77px;transform:scaleX(1.0310);transform-origin:left top;">Others (2)</div>
<div style="position:absolute;top:868.05px;font-size:22.5px;line-height:22.5px;font-family:'Liberation Mono', monospace;font-weight:400;color:#252423;white-space:pre;right:1925.67px;transform:scaleX(0.8600);transform-origin:right top;">86.46</div>
<div style="position:absolute;top:868.05px;font-size:22.5px;line-height:22.5px;font-family:'Liberation Mono', monospace;font-weight:400;color:#252423;white-space:pre;right:1781.71px;transform:scaleX(0.8600);transform-origin:right top;">32.19</div>
<div style="position:absolute;top:868.05px;font-size:22.5px;line-height:22.5px;font-family:'Liberation Mono', monospace;font-weight:400;color:#252423;white-space:pre;right:1639.37px;transform:scaleX(0.8600);transform-origin:right top;">52.76</div>
<div style="position:absolute;top:868.05px;font-size:22.5px;line-height:22.5px;font-family:'Liberation Mono', monospace;font-weight:400;color:#252423;white-space:pre;right:1495.87px;transform:scaleX(0.8600);transform-origin:right top;">14.03</div>
<div style="position:absolute;top:868.05px;font-size:22.5px;line-height:22.5px;font-family:'Liberation Mono', monospace;font-weight:400;color:#252423;white-space:pre;right:1352.57px;transform:scaleX(0.8600);transform-origin:right top;">78.63</div>
<div style="position:absolute;top:868.05px;font-size:22.5px;line-height:22.5px;font-family:'Liberation Mono', monospace;font-weight:400;color:#252423;white-space:pre;right:1209.27px;transform:scaleX(0.8600);transform-origin:right top;">21.18</div>
<div style="position:absolute;top:868.05px;font-size:22.5px;line-height:22.5px;font-family:'Liberation Mono', monospace;font-weight:400;color:#252423;white-space:pre;right:1065.87px;transform:scaleX(0.8600);transform-origin:right top;">99.05</div>
<div style="position:absolute;top:868.05px;font-size:22.5px;line-height:22.5px;font-family:'Liberation Mono', monospace;font-weight:400;color:#252423;white-space:pre;right:922.57px;transform:scaleX(0.8600);transform-origin:right top;">30.16</div>
<div style="position:absolute;top:43.75px;font-size:36.5px;line-height:36.5px;font-family:'Liberation Sans', sans-serif;font-weight:400;color:#252423;white-space:pre;left:1782.53px;transform:scaleX(0.9240);transform-origin:left top;">Display</div>
<div style="position:absolute;top:119.00px;font-size:22px;line-height:22px;font-family:'Liberation Sans', sans-serif;font-weight:400;color:#a0a0a0;white-space:pre;left:1826.80px;">Search</div>
<div style="position:absolute;top:171.35px;font-size:22.5px;line-height:22.5px;font-family:'Liberation Sans', sans-serif;font-weight:400;color:#555555;white-space:pre;-webkit-text-stroke:0.6px #555555;left:1773.49px;transform:scaleX(1.0058);transform-origin:left top;">General</div>
<div style="position:absolute;top:171.35px;font-size:22.5px;line-height:22.5px;font-family:'Liberation Sans', sans-serif;font-weight:400;color:#555555;white-space:pre;-webkit-text-stroke:0.6px #555555;left:1868.42px;transform:scaleX(0.9800);transform-origin:left top;">Hierarchy</div>
<div style="position:absolute;top:171.35px;font-size:22.5px;line-height:22.5px;font-family:'Liberation Sans', sans-serif;font-weight:400;color:#555555;white-space:pre;-webkit-text-stroke:0.6px #555555;left:1979.20px;">Numbers</div>
<div style="position:absolute;top:171.35px;font-size:22.5px;line-height:22.5px;font-family:'Liberation Sans', sans-serif;font-weight:400;color:#555555;white-space:pre;-webkit-text-stroke:0.6px #555555;left:2085.29px;transform:scaleX(1.0051);transform-origin:left top;">Misc.</div>
<div style="position:absolute;top:171.35px;font-size:22.5px;line-height:22.5px;font-family:'Liberation Sans', sans-serif;font-weight:400;color:#252423;white-space:pre;-webkit-text-stroke:0.6px #252423;left:2154.27px;transform:scaleX(1.0334);transform-origin:left top;">Scripting</div>
<div style="position:absolute;top:244.45px;font-size:20.5px;line-height:20.5px;font-family:'Liberation Sans', sans-serif;font-weight:400;color:#252423;white-space:pre;left:1789.44px;transform:scaleX(0.9572);transform-origin:left top;">Note: Script will be executed every time when the</div>
<div style="position:absolute;top:274.25px;font-size:20.5px;line-height:20.5px;font-family:'Liberation Sans', sans-serif;font-weight:400;color:#252423;white-space:pre;left:1790.40px;transform:scaleX(0.9151);transform-origin:left top;">visual is loaded</div>
<div style="position:absolute;top:305.80px;font-size:21px;line-height:21px;font-family:'Liberation Sans', sans-serif;font-weight:700;color:#252423;white-space:pre;left:1790.40px;transform:scaleX(0.9190);transform-origin:left top;">On Load</div>
<div style="position:absolute;top:362.00px;font-size:21px;line-height:21px;font-family:'Liberation Sans', sans-serif;font-weight:400;color:#1a72cf;white-space:pre;left:1799.00px;transform:scaleX(0.9960);transform-origin:left top;"><span style="color:#1a72cf">SETBOTTOMN</span><span style="color:#333">(</span><span style="color:#1a72cf">[Sub-Category]</span><span style="color:#333">, </span><span style="color:#1a72cf">COLUMNS</span><span style="color:#333">.</span></div>
<div style="position:absolute;top:398.00px;font-size:21px;line-height:21px;font-family:'Liberation Sans', sans-serif;font-weight:400;color:#1a72cf;white-space:pre;left:1799.00px;transform:scaleX(1.0193);transform-origin:left top;"><span style="color:#1a72cf">[Qtr 1 &gt; Profit]</span><span style="color:#333">, </span><span style="color:#3a9a58">30</span><span style="color:#333">, </span><span style="color:#1a72cf">FALSE</span><span style="color:#333">)</span></div>
<div style="position:absolute;top:570.80px;font-size:20px;line-height:20px;font-family:'Liberation Sans', sans-serif;font-weight:700;color:#4a4a4a;white-space:pre;left:1818.90px;transform:scaleX(0.8890);transform-origin:left top;">Example<span style="font-weight:400"> :</span></div>
<div style="position:absolute;top:599.25px;font-size:20.5px;line-height:20.5px;font-family:'Liberation Sans', sans-serif;font-weight:400;color:#4a4a4a;white-space:pre;left:1818.90px;transform:scaleX(0.8862);transform-origin:left top;">Use <b>Ctrl + Space</b> to open</div>
<div style="position:absolute;top:627.75px;font-size:20.5px;line-height:20.5px;font-family:'Liberation Sans', sans-serif;font-weight:400;color:#4a4a4a;white-space:pre;left:1818.90px;transform:scaleX(0.8904);transform-origin:left top;">suggestionSHOWBETWEENPERIOD(LASTNQTR(1))</div>
<div style="position:absolute;top:698.90px;font-size:23px;line-height:23px;font-family:'Liberation Sans', sans-serif;font-weight:700;color:#fff;white-space:pre;left:2128.49px;transform:scaleX(0.9075);transform-origin:left top;">Run now</div>
<div style="position:absolute;top:1240.30px;font-size:22px;line-height:22px;font-family:'Liberation Sans', sans-serif;font-weight:400;color:#252423;white-space:pre;left:6.70px;transform:scaleX(0.9484);transform-origin:left top;">Total rows: 21</div>
<div style="position:absolute;top:1240.30px;font-size:22px;line-height:22px;font-family:'Liberation Sans', sans-serif;font-weight:400;color:#252423;white-space:pre;left:157.20px;transform:scaleX(0.9417);transform-origin:left top;">Sum: <span style="font-family:'Liberation Mono', monospace;letter-spacing:-0.6px">1.54m</span></div>
<div style="position:absolute;top:1240.30px;font-size:22px;line-height:22px;font-family:'Liberation Sans', sans-serif;font-weight:400;color:#252423;white-space:pre;left:294.10px;transform:scaleX(0.9302);transform-origin:left top;">Avg: <span style="font-family:'Liberation Mono', monospace;letter-spacing:-0.6px">110.11k</span></div>
<div style="position:absolute;top:1240.30px;font-size:22px;line-height:22px;font-family:'Liberation Sans', sans-serif;font-weight:400;color:#252423;white-space:pre;left:444.20px;">Count: 14</div>
<div style="position:absolute;top:1244.50px;font-size:21px;line-height:21px;font-family:'Liberation Sans', sans-serif;font-weight:400;color:#252423;white-space:pre;left:1269.00px;transform:scaleX(1.0165);transform-origin:left top;"><span style="font-family:'Liberation Mono', monospace;letter-spacing:-0.6px">100</span>%</div>
<div style="position:absolute;top:1240.40px;font-size:22px;line-height:22px;font-family:'Liberation Sans', sans-serif;font-weight:400;color:#252423;white-space:pre;left:1425.08px;transform:scaleX(0.9229);transform-origin:left top;">14 records</div>
<div style="position:absolute;top:1240.50px;font-size:22px;line-height:22px;font-family:'Liberation Sans', sans-serif;font-weight:400;color:#252423;white-space:pre;left:1593.06px;transform:scaleX(0.9371);transform-origin:left top;">Page 1 of 1</div>
</body></html>
